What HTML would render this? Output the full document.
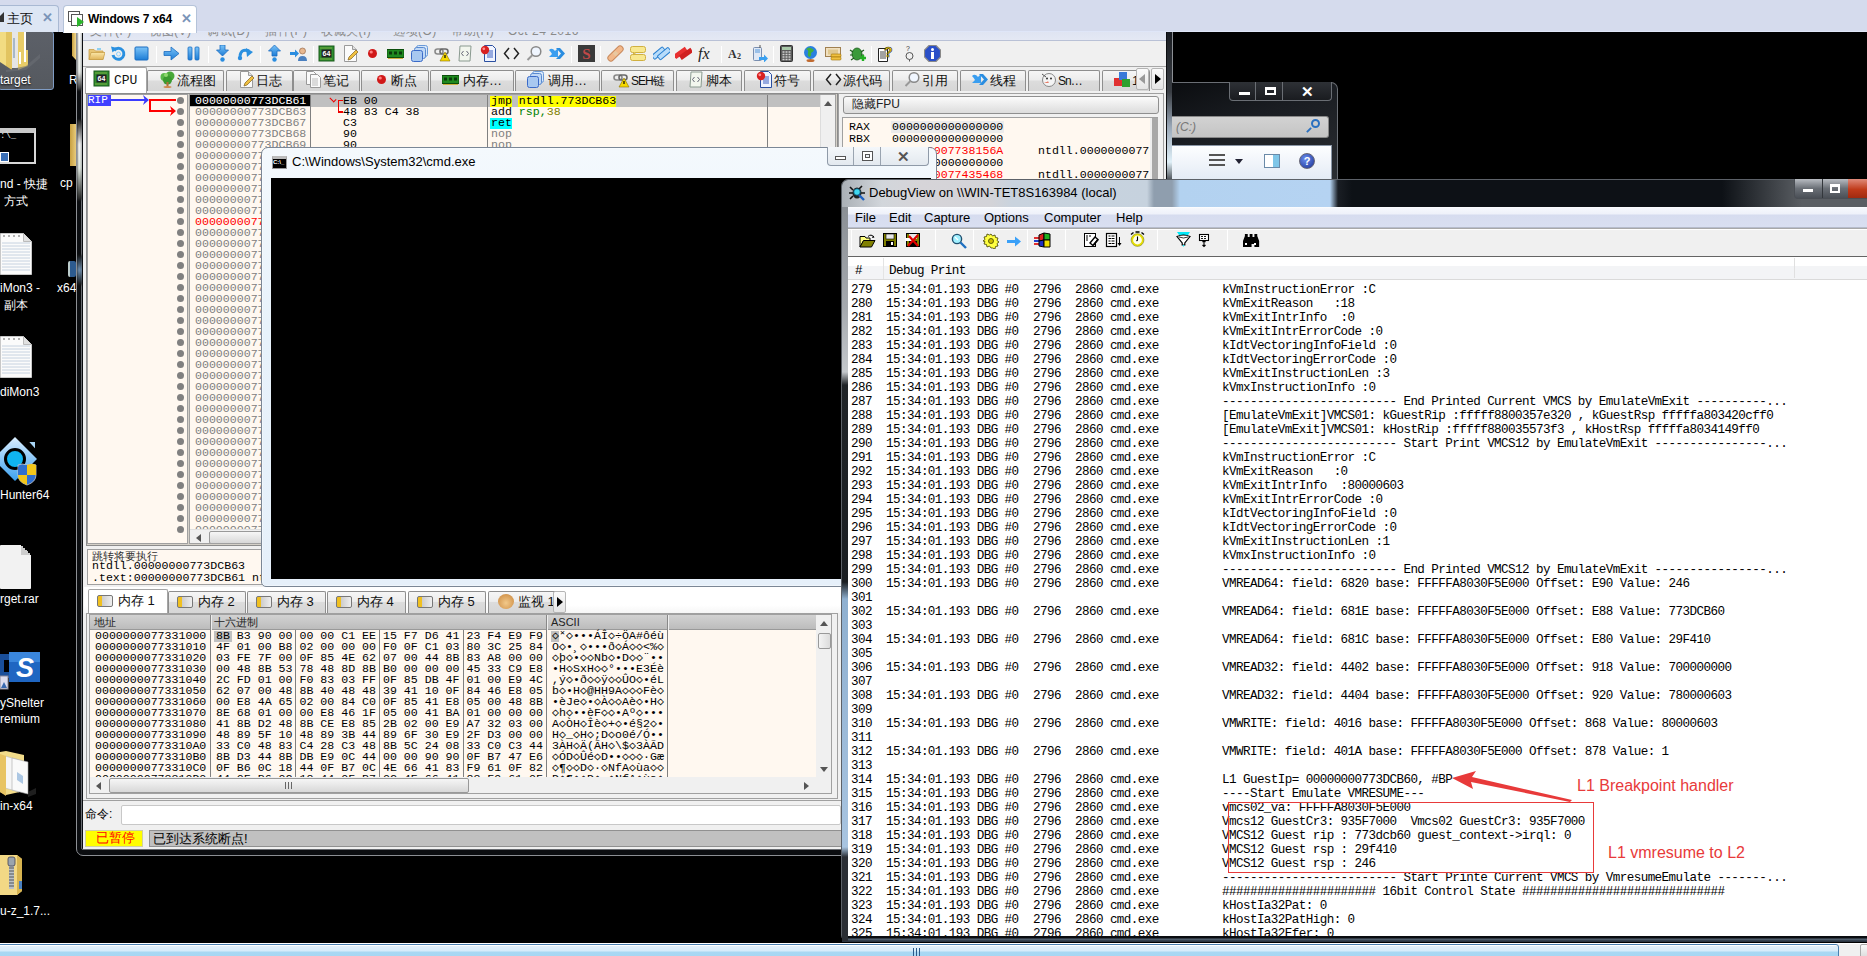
<!DOCTYPE html><html><head><meta charset="utf-8"><style>
*{margin:0;padding:0;box-sizing:border-box}
html,body{width:1867px;height:956px;overflow:hidden;background:#000;font-family:"Liberation Sans",sans-serif;font-size:12px;color:#000;position:relative}
div,span{position:absolute}
.r{position:relative}
.p{white-space:pre}
.mono{font-family:"Liberation Mono",monospace}
.ic{position:absolute;width:16px;height:16px}
</style></head><body>
<div style="left:-2px;top:31px;width:56px;height:59px;background:linear-gradient(#5c6068,#55595f);border:1px solid #7f9cc4;border-radius:3px"></div>
<svg style="position:absolute;left:0;top:32px" width="40" height="40" viewBox="0 0 40 40"><path d="M0 0h6v34l-6-4z" fill="#f2dc82"/><path d="M6 0h6v38l-6-4z" fill="#e2c460"/><path d="M12 0h6v36l-6 0z" fill="#e6e6e6"/><path d="M13 6h2v20h-2z" fill="#a8b8c8"/><path d="M18 0h8v18h2v16l-10 4z" fill="#e8cc68"/><path d="M24 0h2v30h-2z" fill="#fff"/><path d="M19 20h2v12h-2z" fill="#fff"/><path d="M6 38l20-4 14-12v4l-14 12-20 2z" fill="#6a6e74" opacity=".6"/></svg>
<div class="p" style="left:0;top:73px;font-size:12px;color:#fff;text-shadow:0 1px 2px #000">target</div>
<div style="left:72px;top:32px;width:4px;height:28px;background:linear-gradient(90deg,#c8a040,#f2d98f);clip-path:polygon(0 0,100% 0,100% 100%,0 85%)"></div>
<div class="p" style="left:69px;top:73px;color:#fff;font-size:12px">R</div>
<div style="left:-2px;top:128px;width:38px;height:36px;background:#000;border:2px solid #d8d8d8;border-top:5px solid #c9c9c9"></div>
<div class="p mono" style="left:0;top:131px;color:#ddd;font-size:9px">:\_</div>
<div style="left:0;top:152px;width:9px;height:10px;background:#3b6fb5;border:1px solid #fff"></div>
<div style="left:70px;top:124px;width:8px;height:42px;background:linear-gradient(90deg,#c8a040,#f2d98f)"></div>
<div class="p" style="left:0;top:176px;color:#fff;font-size:12px">nd - 快捷</div>
<div class="p" style="left:4px;top:193px;color:#fff;font-size:12px">方式</div>
<div class="p" style="left:60px;top:176px;color:#fff;font-size:12px">cp</div>
<svg style="position:absolute;left:0;top:233px" width="34" height="44" viewBox="0 0 34 44"><path d="M.5 .5h23l8 8v33H.5z" fill="#fbfbfb" stroke="#c8c8c8"/><path d="M2 10h28M2 13h28M2 16h28M2 19h28M2 22h28M2 25h28M2 28h28M2 31h28M2 34h28M2 37h28" stroke="#c6d2e0" stroke-width="1"/><path d="M23.5 .5v8h8" fill="#e0e0e0" stroke="#bbb"/><path d="M0 0h24l8 8h2V0z" fill="#000"/><circle cx="4" cy="3" r="1" fill="#999"/><circle cx="9" cy="3" r="1" fill="#999"/><circle cx="14" cy="3" r="1" fill="#999"/><circle cx="19" cy="3" r="1" fill="#999"/></svg>
<svg style="position:absolute;left:0;top:336px" width="34" height="44" viewBox="0 0 34 44"><path d="M.5 .5h23l8 8v33H.5z" fill="#fbfbfb" stroke="#c8c8c8"/><path d="M2 10h28M2 13h28M2 16h28M2 19h28M2 22h28M2 25h28M2 28h28M2 31h28M2 34h28M2 37h28" stroke="#c6d2e0" stroke-width="1"/><path d="M23.5 .5v8h8" fill="#e0e0e0" stroke="#bbb"/><path d="M0 0h24l8 8h2V0z" fill="#000"/><circle cx="4" cy="3" r="1" fill="#999"/><circle cx="9" cy="3" r="1" fill="#999"/><circle cx="14" cy="3" r="1" fill="#999"/><circle cx="19" cy="3" r="1" fill="#999"/></svg>
<div class="p" style="left:0;top:281px;color:#fff;font-size:12px">iMon3 -</div>
<div class="p" style="left:4px;top:297px;color:#fff;font-size:12px">副本</div>
<div class="p" style="left:57px;top:281px;color:#fff;font-size:12px">x64</div>
<div style="left:68px;top:261px;width:8px;height:16px;background:linear-gradient(90deg,#bcc 0,#bcc 2px,#2d5b8f 2px);border-radius:2px"></div>
<div class="p" style="left:0;top:385px;color:#fff;font-size:12px">diMon3</div>
<svg style="position:absolute;left:0;top:435px" width="42" height="56" viewBox="0 0 42 56"><defs><linearGradient id="hg" x1="0" y1="0" x2="0" y2="1"><stop offset="0" stop-color="#dcefff"/><stop offset="1" stop-color="#3aa0f0"/></linearGradient></defs><path d="M15 2l22 22-22 22L-7 24z" fill="url(#hg)"/><path d="M27 6h9v10z" fill="#a8d4f4" stroke="#000" stroke-width="2"/><circle cx="15" cy="24" r="9.5" fill="#10b4f0" stroke="#000" stroke-width="3"/><path d="M27 30q5-2 9 0v10q0 7-9 10-9-3-9-10V30q4-2 9 0z" fill="#2f6fcf" stroke="#ccc" stroke-width=".8"/><path d="M27 29v21M18 40h18" stroke="none"/><path d="M27 30v10h-9V32q4-2 9-2z" fill="#2f6fcf"/><path d="M27 30q5-2 9 0v10h-9z" fill="#f3c61a"/><path d="M18 40h9v10q-9-3-9-10z" fill="#f3c61a"/></svg>
<div class="p" style="left:0;top:488px;color:#fff;font-size:12px">Hunter64</div>
<div style="left:0;top:545px;width:31px;height:44px;background:#f2f2f2;border-radius:1px"></div>
<div style="left:21px;top:545px;width:10px;height:10px;background:linear-gradient(225deg,#000 50%,#ccc 50%)"></div>
<div class="p" style="left:0;top:592px;color:#fff;font-size:12px">rget.rar</div>
<svg style="position:absolute;left:0;top:650px" width="42" height="42" viewBox="0 0 42 42"><path d="M0 4h9v6H4v12h5v6H0z" fill="#1a4f9a"/><rect x="9" y="2" width="31" height="30" fill="#1f66c2"/><rect x="9" y="2" width="31" height="10" fill="#3a86dc"/><text x="25" y="27" font-family="Liberation Sans" font-weight="bold" font-style="italic" font-size="27" fill="#fff" text-anchor="middle">S</text><rect x="0" y="26" width="8" height="13" fill="#dde" stroke="#889"/><path d="M1 38l3-6 3 6z" fill="#3a6ab0"/></svg>
<div class="p" style="left:0;top:696px;color:#fff;font-size:12px">yShelter</div>
<div class="p" style="left:0;top:712px;color:#fff;font-size:12px">remium</div>
<svg style="position:absolute;left:0;top:748px" width="40" height="50" viewBox="0 0 40 50"><path d="M0 4l6-1 18 4v36L6 47 0 44z" fill="#f2dc8a"/><path d="M5 8l14 4v32L5 40z" fill="#f6f6f6" stroke="#bbb" stroke-width=".6"/><path d="M12 10l16 4v32l-16-4z" fill="#fafafa" stroke="#aaa" stroke-width=".6"/><path d="M17 24l6 4v8l-6-4z" fill="#8ab0d8" opacity=".7"/><path d="M0 6l6 2v40L0 44z" fill="#e8c463"/><path d="M28 44l8-4v6l-8 3z" fill="#333" opacity=".6"/></svg>
<div class="p" style="left:0;top:799px;color:#fff;font-size:12px">in-x64</div>
<svg style="position:absolute;left:0;top:853px" width="30" height="44" viewBox="0 0 30 44"><path d="M0 2h17l5 4v32l-5 4H0z" fill="#f2d885"/><path d="M17 2l5 4v32l-5 4z" fill="#d8b450"/><path d="M19 28h3v8h-3z" fill="#4a80c0"/><path d="M9 4h5v32H9z" fill="#b8c0c8"/><path d="M9 6h5M9 9h5M9 12h5M9 15h5M9 18h5M9 21h5M9 24h5M9 27h5M9 30h5M9 33h5" stroke="#555" stroke-width="1"/><rect x="8" y="4" width="7" height="9" rx="2" fill="#9aa4ae" stroke="#445" stroke-width=".8"/></svg>
<div class="p" style="left:0;top:904px;color:#fff;font-size:12px">u-z_1.7...</div>
<div style="left:76px;top:-10px;width:1097px;height:866px;background:#0b0d10;border:1px solid #8c8f94;border-radius:0 0 7px 7px"></div>
<div style="left:81px;top:-10px;width:1087px;height:860px;border:1px solid #6a6d72;border-radius:0 0 2px 2px"></div>
<div style="left:77px;top:0;width:5px;height:855px;overflow:hidden;border-radius:0 0 0 6px"><div style="left:0;top:30px;width:5px;height:60px;background:linear-gradient(#fff,#e8ece8 70%,#333);filter:blur(1px)"></div><div style="left:0;top:120px;width:5px;height:80px;background:linear-gradient(#222,#f0f0f0 30%,#e0e8e0 60%,#222);filter:blur(1px)"></div><div style="left:0;top:255px;width:5px;height:30px;background:linear-gradient(#111,#7090b0 50%,#111);filter:blur(1px)"></div></div>
<div style="left:1167px;top:32px;width:5px;height:150px;background:linear-gradient(#1a1d22 0,#3a3e44 60px,#9aa8b8 95px,#e0f0f8 130px,#3a3e44 150px);filter:blur(.5px)"></div>
<div style="left:83px;top:0;width:1083px;height:849px;background:#f0f0f0;overflow:hidden">
<div style="left:0;top:32px;width:1083px;height:9px;background:linear-gradient(#dfe4f2,#e4e8f4);border-bottom:1px solid #b9c1d6;overflow:hidden">
<div class="p" style="left:7px;top:-8px;font-size:12px;line-height:14px;color:#8a8a8a;letter-spacing:0.5px">文件(F)</div>
<div class="p" style="left:66px;top:-8px;font-size:12px;line-height:14px;color:#8a8a8a;letter-spacing:0.5px">视图(V)</div>
<div class="p" style="left:124px;top:-8px;font-size:12px;line-height:14px;color:#8a8a8a;letter-spacing:0.5px">调试(D)</div>
<div class="p" style="left:182px;top:-8px;font-size:12px;line-height:14px;color:#8a8a8a;letter-spacing:0.5px">插件(P)</div>
<div class="p" style="left:238px;top:-8px;font-size:12px;line-height:14px;color:#8a8a8a;letter-spacing:0.5px">收藏夹(I)</div>
<div class="p" style="left:310px;top:-8px;font-size:12px;line-height:14px;color:#8a8a8a;letter-spacing:0.5px">选项(O)</div>
<div class="p" style="left:368px;top:-8px;font-size:12px;line-height:14px;color:#8a8a8a;letter-spacing:0.5px">帮助(H)</div>
<div class="p" style="left:425px;top:-8px;font-size:12px;line-height:14px;color:#8a8a8a;letter-spacing:0.5px">Oct 24 2016</div>
</div>
<div style="left:0;top:41px;width:1083px;height:26px;background:#f0f0f0;border-bottom:1px solid #a8a8a8"></div>
<div style="left:73px;top:46px;width:1px;height:17px;background:#c8c8c8;border-right:1px solid #fff"></div>
<div style="left:125px;top:46px;width:1px;height:17px;background:#c8c8c8;border-right:1px solid #fff"></div>
<div style="left:177px;top:46px;width:1px;height:17px;background:#c8c8c8;border-right:1px solid #fff"></div>
<div style="left:230px;top:46px;width:1px;height:17px;background:#c8c8c8;border-right:1px solid #fff"></div>
<div style="left:488px;top:46px;width:1px;height:17px;background:#c8c8c8;border-right:1px solid #fff"></div>
<div style="left:517px;top:46px;width:1px;height:17px;background:#c8c8c8;border-right:1px solid #fff"></div>
<div style="left:638px;top:46px;width:1px;height:17px;background:#c8c8c8;border-right:1px solid #fff"></div>
<div style="left:690px;top:46px;width:1px;height:17px;background:#c8c8c8;border-right:1px solid #fff"></div>
<div style="left:788px;top:46px;width:1px;height:17px;background:#c8c8c8;border-right:1px solid #fff"></div>
<svg style="position:absolute;left:5px;top:45px" width="17" height="17" viewBox="0 0 17 17"><defs><linearGradient id="bl" x1="0" y1="0" x2="0" y2="1"><stop offset="0" stop-color="#7cc4f8"/><stop offset="1" stop-color="#1c7cd6"/></linearGradient><linearGradient id="fd" x1="0" y1="0" x2="0" y2="1"><stop offset="0" stop-color="#fbe7a8"/><stop offset="1" stop-color="#e0b45a"/></linearGradient></defs><path d="M1 4.5h5l1.5 1.5H15v8.5H1z" fill="#e8c574" stroke="#c9a04a" stroke-width=".8"/><path d="M1 14.5l2-7h14l-2 7z" fill="url(#fd)" stroke="#c9a04a" stroke-width=".8"/><rect x="9" y="3" width="4" height="2" fill="#8fd0f0"/></svg>
<svg style="position:absolute;left:27px;top:45px" width="17" height="17" viewBox="0 0 17 17"><path d="M4 5.5A5.5 5.5 0 1 1 3 10" fill="none" stroke="#2a90e0" stroke-width="3"/><path d="M1 1.5l6 1.5-4.5 4.5z" fill="#2a90e0"/><circle cx="8.5" cy="9" r="2" fill="none" stroke="#8cd0ff" stroke-width="1"/></svg>
<svg style="position:absolute;left:50px;top:45px" width="17" height="17" viewBox="0 0 17 17"><rect x="2" y="2" width="13" height="13" rx="1" fill="url(#bl)" stroke="#1a6cc0"/></svg>
<svg style="position:absolute;left:80px;top:45px" width="17" height="17" viewBox="0 0 17 17"><path d="M1 6.5h7V2l8 6.5-8 6.5v-4.5H1z" fill="url(#bl)" stroke="#1a6cc0" stroke-width=".8"/></svg>
<svg style="position:absolute;left:102px;top:45px" width="17" height="17" viewBox="0 0 17 17"><rect x="3" y="2" width="4" height="13" rx="1" fill="url(#bl)" stroke="#1a6cc0" stroke-width=".8"/><rect x="10" y="2" width="4" height="13" rx="1" fill="url(#bl)" stroke="#1a6cc0" stroke-width=".8"/></svg>
<svg style="position:absolute;left:131px;top:45px" width="17" height="17" viewBox="0 0 17 17"><path d="M6 0h5v5h3.5L8.5 11 2.5 5H6z" fill="url(#bl)" stroke="#1a6cc0" stroke-width=".8"/><circle cx="8.5" cy="14.5" r="2.2" fill="#2a8de0"/></svg>
<svg style="position:absolute;left:154px;top:45px" width="17" height="17" viewBox="0 0 17 17"><path d="M3 11q1-8 9-5" fill="none" stroke="#2a90e0" stroke-width="3"/><path d="M9 3l7 4-6 5z" fill="#2a90e0"/><circle cx="3" cy="13" r="2.2" fill="#2a8de0"/></svg>
<svg style="position:absolute;left:183px;top:45px" width="17" height="17" viewBox="0 0 17 17"><path d="M8.5 0l6 6H11v5H6V6H2.5z" fill="url(#bl)" stroke="#1a6cc0" stroke-width=".8"/><circle cx="8.5" cy="14.5" r="2.2" fill="#2a8de0"/></svg>
<svg style="position:absolute;left:207px;top:45px" width="17" height="17" viewBox="0 0 17 17"><path d="M0 7h5V4.5L9 8.5l-4 4V10H0z" fill="#2a8de0"/><circle cx="12.5" cy="6" r="3" fill="#e8b890" stroke="#8a5a3a" stroke-width=".6"/><path d="M8 16q0-5 4.5-5t4.5 5z" fill="#4a80c0"/></svg>
<svg style="position:absolute;left:235px;top:45px" width="17" height="17" viewBox="0 0 17 17"><rect x="1" y="1" width="15" height="15" fill="#2f8f2f" stroke="#1a5a1a"/><rect x="3.5" y="4.5" width="10" height="8" fill="#222"/><text x="8.5" y="11.2" font-family="Liberation Sans" font-weight="bold" font-size="7" fill="#fff" text-anchor="middle">64</text><path d="M3 2.5v1M5 2.5v1M7 2.5v1M9 2.5v1M11 2.5v1M13 2.5v1M3 13.5v1M5 13.5v1M7 13.5v1M9 13.5v1M11 13.5v1M13 13.5v1" stroke="#f0d060" stroke-width=".8"/></svg>
<svg style="position:absolute;left:259px;top:45px" width="17" height="17" viewBox="0 0 17 17"><path d="M2.5 .5h8l4 4v12h-12z" fill="#fbfbfb" stroke="#9a9a9a"/><path d="M10.5 .5v4h4" fill="#e0e0e0" stroke="#9a9a9a"/><path d="M6 15l1-3 7-7 2 2-7 7z" fill="#f0c040" stroke="#806020" stroke-width=".7"/></svg>
<svg style="position:absolute;left:281px;top:45px" width="17" height="17" viewBox="0 0 17 17"><circle cx="8.5" cy="8.5" r="4.5" fill="#d01818"/><circle cx="7.2" cy="7" r="1.6" fill="#ff8080"/></svg>
<svg style="position:absolute;left:304px;top:45px" width="17" height="17" viewBox="0 0 17 17"><rect x="0" y="4.5" width="17" height="8" fill="#1f8a1f" stroke="#0b4e0b"/><rect x="2" y="6.5" width="3" height="3" fill="#0b3a0b"/><rect x="7" y="6.5" width="3" height="3" fill="#0b3a0b"/><rect x="12" y="6.5" width="3" height="3" fill="#0b3a0b"/><path d="M1 13.5h15" stroke="#d0b040"/></svg>
<svg style="position:absolute;left:328px;top:45px" width="17" height="17" viewBox="0 0 17 17"><rect x="5.5" y=".5" width="11" height="11" rx="2" fill="#d8e8fa" stroke="#6a9ad8"/><rect x="3.5" y="2.5" width="11" height="11" rx="2" fill="#c0d8f5" stroke="#5a8ad0"/><rect x=".5" y="5.5" width="11" height="11" rx="2" fill="#a8c8f0" stroke="#3a6ac8"/></svg>
<svg style="position:absolute;left:351px;top:45px" width="17" height="17" viewBox="0 0 17 17"><rect x="1" y="4" width="8" height="5" rx="2.5" fill="none" stroke="#8a8a8a" stroke-width="1.6"/><rect x="6" y="4" width="8" height="5" rx="2.5" fill="none" stroke="#6a6a6a" stroke-width="1.6"/><path d="M11 7l5 9H6z" fill="#f5d800" stroke="#8a7000" stroke-width=".6"/><path d="M11 10v3" stroke="#000" stroke-width="1.2"/></svg>
<svg style="position:absolute;left:374px;top:45px" width="17" height="17" viewBox="0 0 17 17"><path d="M3 1h11l-1 15H2z" fill="#f2f6ee" stroke="#8a9a90"/><path d="M6.5 6l-2 2.5 2 2.5M9.5 6l2 2.5-2 2.5" stroke="#556" fill="none" stroke-width=".9"/></svg>
<svg style="position:absolute;left:397px;top:45px" width="17" height="17" viewBox="0 0 17 17"><path d="M4.5 .5h8l3 3v13h-11z" fill="#f0f4ff" stroke="#2a4fa0"/><path d="M7 6h6M7 8h6M7 10h6M7 12h6" stroke="#3a5fc0"/><circle cx="5" cy="5" r="4.2" fill="#d82020"/><circle cx="3.8" cy="3.8" r="1.4" fill="#ff9090"/></svg>
<svg style="position:absolute;left:420px;top:45px" width="17" height="17" viewBox="0 0 17 17"><path d="M6 3L1.5 8.5 6 14M11 3l4.5 5.5L11 14" fill="none" stroke="#222" stroke-width="1.5"/></svg>
<svg style="position:absolute;left:443px;top:45px" width="17" height="17" viewBox="0 0 17 17"><circle cx="10" cy="6.5" r="4.8" fill="#f0f6ff" stroke="#888" stroke-width="1.5"/><path d="M6.5 10L1.5 15" stroke="#999" stroke-width="2"/></svg>
<svg style="position:absolute;left:466px;top:45px" width="17" height="17" viewBox="0 0 17 17"><path d="M0 5q3-3 6 1l3-3v9H0l3-3q-1-2-3-4z" fill="#3a9ef0"/><path d="M7 3h4l5 5.5-5 5.5H7l5-5.5z" fill="#2a8de0"/></svg>
<svg style="position:absolute;left:495px;top:45px" width="17" height="17" viewBox="0 0 17 17"><rect x="0" y="0" width="17" height="17" fill="#3a3a3a"/><text x="8.5" y="14" font-family="Liberation Serif" font-weight="bold" font-size="15" fill="#c04848" text-anchor="middle">S</text></svg>
<svg style="position:absolute;left:524px;top:45px" width="17" height="17" viewBox="0 0 17 17"><rect x="-1" y="5.5" width="19" height="6" rx="3" fill="#f2b88a" stroke="#c8885a" transform="rotate(-45 8.5 8.5)"/><rect x="6.5" y="6.5" width="4" height="4" fill="#e8c8a0" transform="rotate(-45 8.5 8.5)"/></svg>
<svg style="position:absolute;left:547px;top:45px" width="17" height="17" viewBox="0 0 17 17"><rect x=".5" y="1.5" width="15" height="6" rx="2" fill="#f8e890" stroke="#d0b040"/><rect x=".5" y="9.5" width="15" height="6" rx="2" fill="#f8e890" stroke="#d0b040"/><path d="M4 7.5l-1 2.5 3-2.5" fill="#f8e890" stroke="#d0b040"/></svg>
<svg style="position:absolute;left:570px;top:45px" width="17" height="17" viewBox="0 0 17 17"><rect x="-1" y="4" width="14" height="5" rx="1" fill="#b8dcfa" stroke="#2a80d0" transform="rotate(-40 8 8)"/><rect x="3" y="8" width="14" height="5" rx="1" fill="#b8dcfa" stroke="#2a80d0" transform="rotate(-40 8 8)"/></svg>
<svg style="position:absolute;left:592px;top:45px" width="17" height="17" viewBox="0 0 17 17"><rect x="-1" y="4" width="14" height="5" fill="#e83030" transform="rotate(-35 8 8)"/><rect x="3" y="8" width="14" height="5" fill="#d02020" transform="rotate(-35 8 8)"/></svg>
<svg style="position:absolute;left:615px;top:45px" width="17" height="17" viewBox="0 0 17 17"><text x="0" y="14" font-family="Liberation Serif" font-style="italic" font-size="16" fill="#222">fx</text></svg>
<svg style="position:absolute;left:645px;top:45px" width="17" height="17" viewBox="0 0 17 17"><text x="0" y="13" font-family="Liberation Serif" font-weight="bold" font-size="12" fill="#333">A</text><text x="9" y="14" font-family="Liberation Serif" font-weight="bold" font-size="8" fill="#333">2</text></svg>
<svg style="position:absolute;left:668px;top:45px" width="17" height="17" viewBox="0 0 17 17"><rect x="2.5" y="2.5" width="8" height="13" rx="1" fill="#dfe8f5" stroke="#7a8fb0"/><rect x="4" y="4" width="5" height="4" fill="#9ac0e8"/><path d="M9 0v3" stroke="#555"/><path d="M8 12h5v-2.5l4 4-4 4V15H8z" fill="#3aa0f0"/></svg>
<svg style="position:absolute;left:695px;top:45px" width="17" height="17" viewBox="0 0 17 17"><rect x="2.5" y=".5" width="12" height="16" rx="1" fill="#5a5a5a" stroke="#333"/><rect x="4" y="2" width="9" height="3" fill="#a8c8a8"/><path d="M4.5 7h2M7.5 7h2M10.5 7h2M4.5 9.5h2M7.5 9.5h2M10.5 9.5h2M4.5 12h2M7.5 12h2M10.5 12h2M4.5 14.5h2M7.5 14.5h2M10.5 14.5h2" stroke="#d0d0d0" stroke-width="1.3"/></svg>
<svg style="position:absolute;left:719px;top:45px" width="17" height="17" viewBox="0 0 17 17"><circle cx="8.5" cy="7.5" r="6.5" fill="#2a80e0"/><path d="M4 4q3 1 2 4t2 4q2-2 1-4 2-1 3-3-2-2-5-2.5z" fill="#40b040"/><ellipse cx="8.5" cy="15.5" rx="4" ry="1.5" fill="#c06a30"/></svg>
<svg style="position:absolute;left:742px;top:45px" width="17" height="17" viewBox="0 0 17 17"><rect x=".5" y="2.5" width="15" height="9" fill="#f0e0c0" stroke="#a08050"/><rect x="3" y="4.5" width="10" height="5" fill="#e0c890"/><rect x="6" y="9" width="10" height="3" rx="1" fill="#f0c040" stroke="#a07000" stroke-width=".6"/><rect x="6" y="12" width="10" height="3" rx="1" fill="#f0c040" stroke="#a07000" stroke-width=".6"/></svg>
<svg style="position:absolute;left:766px;top:45px" width="17" height="17" viewBox="0 0 17 17"><ellipse cx="8" cy="9" rx="5" ry="6" fill="#3a9a3a" stroke="#1a5a1a" stroke-width=".8"/><path d="M1 5l3 2M1 10h3M2 15l3-2M15 5l-3 2M15 10h-3" stroke="#1a5a1a" stroke-width="1.2"/><path d="M11 13h6M14 10v6" stroke="#20b020" stroke-width="2.4"/></svg>
<svg style="position:absolute;left:794px;top:45px" width="17" height="17" viewBox="0 0 17 17"><path d="M1.5 3.5h9v13h-9z" fill="#fff" stroke="#222"/><path d="M3 7h6M3 9h6M3 11h6M3 13h6" stroke="#444"/><text x="7" y="12" font-family="Liberation Sans" font-weight="bold" font-size="14" fill="#ffd800" stroke="#222" stroke-width=".6">?</text></svg>
<svg style="position:absolute;left:818px;top:45px" width="17" height="17" viewBox="0 0 17 17"><text x="5" y="6" font-family="Liberation Sans" font-size="7" fill="#333">?</text><circle cx="8.5" cy="11" r="3.5" fill="none" stroke="#555"/><path d="M8.5 14.5v2" stroke="#555"/></svg>
<svg style="position:absolute;left:841px;top:45px" width="17" height="17" viewBox="0 0 17 17"><path d="M5 .5h7l4.5 4.5v7L12 16.5H5L.5 12V5z" fill="#2a4fc8" stroke="#888" stroke-width="1.2"/><circle cx="8.5" cy="4.5" r="1.5" fill="#fff"/><rect x="7" y="7" width="3" height="7" fill="#fff"/></svg>
<div style="left:0;top:67px;width:1083px;height:26px;background:#f0f0f0"></div>
<div style="left:64px;top:70px;width:77px;height:21px;background:linear-gradient(#f6f6f6,#ececec 45%,#dcdcdc 50%,#d6d6d6);border:1px solid #8e8e8e;border-bottom:none;border-radius:2px 2px 0 0"></div>
<div class="p" style="left:94px;top:73px;font-size:13px;line-height:16px;color:#111;">流程图</div>
<div style="left:143px;top:70px;width:67px;height:21px;background:linear-gradient(#f6f6f6,#ececec 45%,#dcdcdc 50%,#d6d6d6);border:1px solid #8e8e8e;border-bottom:none;border-radius:2px 2px 0 0"></div>
<div class="p" style="left:173px;top:73px;font-size:13px;line-height:16px;color:#111;">日志</div>
<div style="left:210px;top:70px;width:67px;height:21px;background:linear-gradient(#f6f6f6,#ececec 45%,#dcdcdc 50%,#d6d6d6);border:1px solid #8e8e8e;border-bottom:none;border-radius:2px 2px 0 0"></div>
<div class="p" style="left:240px;top:73px;font-size:13px;line-height:16px;color:#111;">笔记</div>
<div style="left:278px;top:70px;width:68px;height:21px;background:linear-gradient(#f6f6f6,#ececec 45%,#dcdcdc 50%,#d6d6d6);border:1px solid #8e8e8e;border-bottom:none;border-radius:2px 2px 0 0"></div>
<div class="p" style="left:308px;top:73px;font-size:13px;line-height:16px;color:#111;">断点</div>
<div style="left:347px;top:70px;width:84px;height:21px;background:linear-gradient(#f6f6f6,#ececec 45%,#dcdcdc 50%,#d6d6d6);border:1px solid #8e8e8e;border-bottom:none;border-radius:2px 2px 0 0"></div>
<div class="p" style="left:380px;top:73px;font-size:13px;line-height:16px;color:#111;">内存…</div>
<div style="left:432px;top:70px;width:85px;height:21px;background:linear-gradient(#f6f6f6,#ececec 45%,#dcdcdc 50%,#d6d6d6);border:1px solid #8e8e8e;border-bottom:none;border-radius:2px 2px 0 0"></div>
<div class="p" style="left:465px;top:73px;font-size:13px;line-height:16px;color:#111;">调用…</div>
<div style="left:518px;top:70px;width:73px;height:21px;background:linear-gradient(#f6f6f6,#ececec 45%,#dcdcdc 50%,#d6d6d6);border:1px solid #8e8e8e;border-bottom:none;border-radius:2px 2px 0 0"></div>
<div class="p" style="left:548px;top:73px;font-size:13px;line-height:16px;color:#111;letter-spacing:-1px;font-size:12px">SEH链</div>
<div style="left:593px;top:70px;width:66px;height:21px;background:linear-gradient(#f6f6f6,#ececec 45%,#dcdcdc 50%,#d6d6d6);border:1px solid #8e8e8e;border-bottom:none;border-radius:2px 2px 0 0"></div>
<div class="p" style="left:623px;top:73px;font-size:13px;line-height:16px;color:#111;">脚本</div>
<div style="left:661px;top:70px;width:67px;height:21px;background:linear-gradient(#f6f6f6,#ececec 45%,#dcdcdc 50%,#d6d6d6);border:1px solid #8e8e8e;border-bottom:none;border-radius:2px 2px 0 0"></div>
<div class="p" style="left:691px;top:73px;font-size:13px;line-height:16px;color:#111;">符号</div>
<div style="left:730px;top:70px;width:77px;height:21px;background:linear-gradient(#f6f6f6,#ececec 45%,#dcdcdc 50%,#d6d6d6);border:1px solid #8e8e8e;border-bottom:none;border-radius:2px 2px 0 0"></div>
<div class="p" style="left:760px;top:73px;font-size:13px;line-height:16px;color:#111;">源代码</div>
<div style="left:809px;top:70px;width:66px;height:21px;background:linear-gradient(#f6f6f6,#ececec 45%,#dcdcdc 50%,#d6d6d6);border:1px solid #8e8e8e;border-bottom:none;border-radius:2px 2px 0 0"></div>
<div class="p" style="left:839px;top:73px;font-size:13px;line-height:16px;color:#111;">引用</div>
<div style="left:877px;top:70px;width:66px;height:21px;background:linear-gradient(#f6f6f6,#ececec 45%,#dcdcdc 50%,#d6d6d6);border:1px solid #8e8e8e;border-bottom:none;border-radius:2px 2px 0 0"></div>
<div class="p" style="left:907px;top:73px;font-size:13px;line-height:16px;color:#111;">线程</div>
<div style="left:945px;top:70px;width:72px;height:21px;background:linear-gradient(#f6f6f6,#ececec 45%,#dcdcdc 50%,#d6d6d6);border:1px solid #8e8e8e;border-bottom:none;border-radius:2px 2px 0 0"></div>
<div class="p" style="left:975px;top:73px;font-size:13px;line-height:16px;color:#111;letter-spacing:-1px;font-size:12px">Sn…</div>
<div style="left:1019px;top:70px;width:48px;height:21px;background:linear-gradient(#f6f6f6,#ececec 45%,#dcdcdc 50%,#d6d6d6);border:1px solid #8e8e8e;border-bottom:none;border-radius:2px 2px 0 0"></div>
<div class="p" style="left:1049px;top:73px;font-size:13px;line-height:16px;color:#111;">1</div>
<div style="left:2px;top:67px;width:62px;height:27px;background:#fff;border:1px solid #a5a5a5;border-bottom:none;border-radius:2px 2px 0 0"></div>
<div class="p" style="left:31px;top:73px;font:13px/16px 'Liberation Mono';color:#111">CPU</div>
<svg style="position:absolute;left:76px;top:71px" width="17" height="17" viewBox="0 0 17 17"><circle cx="5.5" cy="6" r="4" fill="#5ab84a"/><circle cx="11" cy="5" r="4.5" fill="#48a838"/><circle cx="8.5" cy="9" r="4.5" fill="#3a9a30"/><circle cx="7" cy="4" r="2" fill="#8fd870"/><path d="M7.5 11h2v5h-2z" fill="#b0703a"/><ellipse cx="8.5" cy="16" rx="4" ry="1" fill="#d08a50"/></svg>
<svg style="position:absolute;left:155px;top:71px" width="17" height="17" viewBox="0 0 17 17"><path d="M2.5 .5h8l4 4v12h-12z" fill="#fbfbfb" stroke="#9a9a9a"/><path d="M10.5 .5v4h4" fill="#e0e0e0" stroke="#9a9a9a"/><path d="M6 15l1-3 7-7 2 2-7 7z" fill="#f0c040" stroke="#806020" stroke-width=".7"/></svg>
<svg style="position:absolute;left:222px;top:71px" width="17" height="17" viewBox="0 0 17 17"><path d="M1.5 .5h7l3 3v10h-10z" fill="#fafafa" stroke="#999"/><path d="M5.5 3.5h7l3 3v10h-10z" fill="#fafafa" stroke="#999"/><path d="M7 8h6M7 10h6M7 12h6M7 14h6" stroke="#bbb"/></svg>
<svg style="position:absolute;left:290px;top:71px" width="17" height="17" viewBox="0 0 17 17"><circle cx="8.5" cy="8.5" r="4.5" fill="#d01818"/><circle cx="7.2" cy="7" r="1.6" fill="#ff8080"/></svg>
<svg style="position:absolute;left:359px;top:71px" width="17" height="17" viewBox="0 0 17 17"><rect x="0" y="4.5" width="17" height="8" fill="#1f8a1f" stroke="#0b4e0b"/><rect x="2" y="6.5" width="3" height="3" fill="#0b3a0b"/><rect x="7" y="6.5" width="3" height="3" fill="#0b3a0b"/><rect x="12" y="6.5" width="3" height="3" fill="#0b3a0b"/><path d="M1 13.5h15" stroke="#d0b040"/></svg>
<svg style="position:absolute;left:444px;top:71px" width="17" height="17" viewBox="0 0 17 17"><rect x="5.5" y=".5" width="11" height="11" rx="2" fill="#d8e8fa" stroke="#6a9ad8"/><rect x="3.5" y="2.5" width="11" height="11" rx="2" fill="#c0d8f5" stroke="#5a8ad0"/><rect x=".5" y="5.5" width="11" height="11" rx="2" fill="#a8c8f0" stroke="#3a6ac8"/></svg>
<svg style="position:absolute;left:530px;top:71px" width="17" height="17" viewBox="0 0 17 17"><rect x="1" y="4" width="8" height="5" rx="2.5" fill="none" stroke="#8a8a8a" stroke-width="1.6"/><rect x="6" y="4" width="8" height="5" rx="2.5" fill="none" stroke="#6a6a6a" stroke-width="1.6"/><path d="M11 7l5 9H6z" fill="#f5d800" stroke="#8a7000" stroke-width=".6"/><path d="M11 10v3" stroke="#000" stroke-width="1.2"/></svg>
<svg style="position:absolute;left:605px;top:71px" width="17" height="17" viewBox="0 0 17 17"><path d="M3 1h11l-1 15H2z" fill="#f2f6ee" stroke="#8a9a90"/><path d="M6.5 6l-2 2.5 2 2.5M9.5 6l2 2.5-2 2.5" stroke="#556" fill="none" stroke-width=".9"/></svg>
<svg style="position:absolute;left:673px;top:71px" width="17" height="17" viewBox="0 0 17 17"><path d="M4.5 .5h8l3 3v13h-11z" fill="#f0f4ff" stroke="#2a4fa0"/><path d="M7 6h6M7 8h6M7 10h6M7 12h6" stroke="#3a5fc0"/><circle cx="5" cy="5" r="4.2" fill="#d82020"/><circle cx="3.8" cy="3.8" r="1.4" fill="#ff9090"/></svg>
<svg style="position:absolute;left:742px;top:71px" width="17" height="17" viewBox="0 0 17 17"><path d="M6 3L1.5 8.5 6 14M11 3l4.5 5.5L11 14" fill="none" stroke="#222" stroke-width="1.5"/></svg>
<svg style="position:absolute;left:821px;top:71px" width="17" height="17" viewBox="0 0 17 17"><circle cx="10" cy="6.5" r="4.8" fill="#f0f6ff" stroke="#888" stroke-width="1.5"/><path d="M6.5 10L1.5 15" stroke="#999" stroke-width="2"/></svg>
<svg style="position:absolute;left:889px;top:71px" width="17" height="17" viewBox="0 0 17 17"><path d="M0 5q3-3 6 1l3-3v9H0l3-3q-1-2-3-4z" fill="#3a9ef0"/><path d="M7 3h4l5 5.5-5 5.5H7l5-5.5z" fill="#2a8de0"/></svg>
<svg style="position:absolute;left:957px;top:71px" width="17" height="17" viewBox="0 0 17 17"><circle cx="9" cy="9" r="6.5" fill="#f4f4f4" stroke="#888"/><circle cx="7" cy="7.5" r="1" fill="#333"/><circle cx="11" cy="7.5" r="1" fill="#333"/><path d="M4 12l4-1.5 1 1z" fill="#e04020"/><path d="M2 3l4 3" stroke="#555"/></svg>
<svg style="position:absolute;left:1031px;top:71px" width="17" height="17" viewBox="0 0 17 17"><rect x="0" y="7" width="8" height="8" fill="#e03030"/><rect x="5" y="1" width="8" height="8" fill="#3a7ad8"/><rect x="8" y="8" width="8" height="8" fill="#2fa02f"/></svg>
<svg style="position:absolute;left:10px;top:70px" width="17" height="17" viewBox="0 0 17 17"><rect x="1" y="1" width="15" height="15" fill="#2f8f2f" stroke="#1a5a1a"/><rect x="3.5" y="4.5" width="10" height="8" fill="#222"/><text x="8.5" y="11.2" font-family="Liberation Sans" font-weight="bold" font-size="7" fill="#fff" text-anchor="middle">64</text><path d="M3 2.5v1M5 2.5v1M7 2.5v1M9 2.5v1M11 2.5v1M13 2.5v1M3 13.5v1M5 13.5v1M7 13.5v1M9 13.5v1M11 13.5v1M13 13.5v1" stroke="#f0d060" stroke-width=".8"/></svg>
<div style="left:1053px;top:68px;width:13px;height:22px;background:linear-gradient(#fbfbfb,#e5e5e5);border:1px solid #b5b5b5;border-radius:2px"></div>
<div style="left:1056px;top:74px;width:6px;height:10px;background:#999;clip-path:polygon(100% 0,0 50%,100% 100%)"></div>
<div style="left:1068px;top:68px;width:13px;height:22px;background:linear-gradient(#fbfbfb,#e5e5e5);border:1px solid #b5b5b5;border-radius:2px"></div>
<div style="left:1072px;top:74px;width:6px;height:10px;background:#000;clip-path:polygon(0 0,100% 50%,0 100%)"></div>
<div style="left:3px;top:93px;width:752px;height:453px;background:#d4d0c8;border:1px solid #8c8c8c"></div>
<div style="left:4px;top:94px;width:101px;height:450px;background:#fff8f0;border:1px solid #a0a0a0"></div>
<div style="left:106px;top:94px;width:647px;height:450px;background:#fff8f0;border:1px solid #a0a0a0;overflow:hidden">
<div style="left:0;top:0;width:630px;height:12px;background:#c0c0c0"></div>
<div style="left:0;top:0;width:120px;height:11px;background:#000"></div>
<div class="p mono" style="left:5px;top:0px;font-size:11.6px;line-height:12px;color:#fff">00000000773DCB61</div>
<div class="p mono" style="left:153px;top:0px;font-size:11.6px;line-height:12px;color:#000">EB 00</div>
<div class="p mono" style="left:5px;top:11px;font-size:11.6px;line-height:12px;color:#808080">00000000773DCB63</div>
<div class="p mono" style="left:153px;top:11px;font-size:11.6px;line-height:12px;color:#000">48 83 C4 38</div>
<div class="p mono" style="left:5px;top:22px;font-size:11.6px;line-height:12px;color:#808080">00000000773DCB67</div>
<div class="p mono" style="left:153px;top:22px;font-size:11.6px;line-height:12px;color:#000">C3</div>
<div class="p mono" style="left:5px;top:33px;font-size:11.6px;line-height:12px;color:#808080">00000000773DCB68</div>
<div class="p mono" style="left:153px;top:33px;font-size:11.6px;line-height:12px;color:#000">90</div>
<div class="p mono" style="left:5px;top:44px;font-size:11.6px;line-height:12px;color:#808080">00000000773DCB69</div>
<div class="p mono" style="left:153px;top:44px;font-size:11.6px;line-height:12px;color:#000">90</div>
<div class="p mono" style="left:5px;top:55px;font-size:11.6px;line-height:12px;color:#808080">00000000773DCB6A</div>
<div class="p mono" style="left:5px;top:66px;font-size:11.6px;line-height:12px;color:#808080">00000000773DCB6B</div>
<div class="p mono" style="left:5px;top:77px;font-size:11.6px;line-height:12px;color:#808080">00000000773DCB6C</div>
<div class="p mono" style="left:5px;top:88px;font-size:11.6px;line-height:12px;color:#808080">00000000773DCB6D</div>
<div class="p mono" style="left:5px;top:99px;font-size:11.6px;line-height:12px;color:#808080">00000000773DCB6E</div>
<div class="p mono" style="left:5px;top:110px;font-size:11.6px;line-height:12px;color:#808080">00000000773DCB6F</div>
<div class="p mono" style="left:5px;top:121px;font-size:11.6px;line-height:12px;color:#ff0000">00000000773DCB70</div>
<div class="p mono" style="left:5px;top:132px;font-size:11.6px;line-height:12px;color:#808080">00000000773DCB71</div>
<div class="p mono" style="left:5px;top:143px;font-size:11.6px;line-height:12px;color:#808080">00000000773DCB72</div>
<div class="p mono" style="left:5px;top:154px;font-size:11.6px;line-height:12px;color:#808080">00000000773DCB73</div>
<div class="p mono" style="left:5px;top:165px;font-size:11.6px;line-height:12px;color:#808080">00000000773DCB74</div>
<div class="p mono" style="left:5px;top:176px;font-size:11.6px;line-height:12px;color:#808080">00000000773DCB75</div>
<div class="p mono" style="left:5px;top:187px;font-size:11.6px;line-height:12px;color:#808080">00000000773DCB76</div>
<div class="p mono" style="left:5px;top:198px;font-size:11.6px;line-height:12px;color:#808080">00000000773DCB77</div>
<div class="p mono" style="left:5px;top:209px;font-size:11.6px;line-height:12px;color:#808080">00000000773DCB78</div>
<div class="p mono" style="left:5px;top:220px;font-size:11.6px;line-height:12px;color:#808080">00000000773DCB79</div>
<div class="p mono" style="left:5px;top:231px;font-size:11.6px;line-height:12px;color:#808080">00000000773DCB7A</div>
<div class="p mono" style="left:5px;top:242px;font-size:11.6px;line-height:12px;color:#808080">00000000773DCB7B</div>
<div class="p mono" style="left:5px;top:253px;font-size:11.6px;line-height:12px;color:#808080">00000000773DCB7C</div>
<div class="p mono" style="left:5px;top:264px;font-size:11.6px;line-height:12px;color:#808080">00000000773DCB7D</div>
<div class="p mono" style="left:5px;top:275px;font-size:11.6px;line-height:12px;color:#808080">00000000773DCB7E</div>
<div class="p mono" style="left:5px;top:286px;font-size:11.6px;line-height:12px;color:#808080">00000000773DCB7F</div>
<div class="p mono" style="left:5px;top:297px;font-size:11.6px;line-height:12px;color:#808080">00000000773DCB80</div>
<div class="p mono" style="left:5px;top:308px;font-size:11.6px;line-height:12px;color:#808080">00000000773DCB81</div>
<div class="p mono" style="left:5px;top:319px;font-size:11.6px;line-height:12px;color:#808080">00000000773DCB82</div>
<div class="p mono" style="left:5px;top:330px;font-size:11.6px;line-height:12px;color:#808080">00000000773DCB83</div>
<div class="p mono" style="left:5px;top:341px;font-size:11.6px;line-height:12px;color:#808080">00000000773DCB84</div>
<div class="p mono" style="left:5px;top:352px;font-size:11.6px;line-height:12px;color:#808080">00000000773DCB85</div>
<div class="p mono" style="left:5px;top:363px;font-size:11.6px;line-height:12px;color:#808080">00000000773DCB86</div>
<div class="p mono" style="left:5px;top:374px;font-size:11.6px;line-height:12px;color:#808080">00000000773DCB87</div>
<div class="p mono" style="left:5px;top:385px;font-size:11.6px;line-height:12px;color:#808080">00000000773DCB88</div>
<div class="p mono" style="left:5px;top:396px;font-size:11.6px;line-height:12px;color:#808080">00000000773DCB89</div>
<div class="p mono" style="left:5px;top:407px;font-size:11.6px;line-height:12px;color:#808080">00000000773DCB8A</div>
<div class="p mono" style="left:5px;top:418px;font-size:11.6px;line-height:12px;color:#808080">00000000773DCB8B</div>
<div class="p mono" style="left:5px;top:429px;font-size:11.6px;line-height:12px;color:#808080">00000000773DCB8C</div>
<div style="left:300px;top:1px;width:22px;height:11px;background:#ffff00"></div>
<div style="left:328px;top:1px;width:98px;height:11px;background:#ffff00"></div>
<div style="left:300px;top:23px;width:22px;height:11px;background:#00ffff"></div>
<div class="p mono" style="left:301px;top:0px;font-size:11.6px;line-height:12px;color:#000">jmp <span class="r" style="color:#000">ntdll.773DCB63</span></div>
<div class="p mono" style="left:301px;top:11px;font-size:11.6px;line-height:12px;color:#000">add <span class="r" style="color:#008000">rsp,<span class="r" style="color:#808000">38</span></span></div>
<div class="p mono" style="left:301px;top:22px;font-size:11.6px;line-height:12px;color:#000">ret</div>
<div class="p mono" style="left:301px;top:33px;font-size:11.6px;line-height:12px;color:#808080">nop</div>
<div class="p mono" style="left:301px;top:44px;font-size:11.6px;line-height:12px;color:#808080">nop</div>
<div style="left:120px;top:0;width:1px;height:450px;background:#808080"></div>
<div style="left:297px;top:0;width:1px;height:450px;background:#808080"></div>
<div style="left:577px;top:0;width:1px;height:450px;background:#808080"></div>
<div style="left:140px;top:2px;width:6px;height:4px;border:1px solid #e00;border-top:none;border-left:none;transform:rotate(45deg)"></div>
<div style="left:148px;top:5px;width:5px;height:13px;border:1px solid #e00;border-right:none;border-bottom:2px solid #e00"></div>
<div style="left:630px;top:0;width:16px;height:450px;background:#f0f0f0;border-left:1px solid #ddd"></div>
<div style="left:634px;top:6px;width:8px;height:5px;background:#555;clip-path:polygon(50% 0,100% 100%,0 100%)"></div>
<div style="left:0;top:434px;width:630px;height:16px;background:#f0f0f0;border-top:1px solid #e0e0e0"></div>
<div style="left:6px;top:439px;width:5px;height:8px;background:#555;clip-path:polygon(100% 0,0 50%,100% 100%)"></div>
<div style="left:19px;top:436px;width:600px;height:13px;background:linear-gradient(#f6f6f6,#d8d8d8);border:1px solid #999;border-radius:2px"></div>
</div>
<div class="p mono" style="left:5px;top:95px;width:23px;height:11px;background:#4040ff;color:#fff;font-size:11px;line-height:11px">RIP</div>
<div style="left:28px;top:99px;width:37px;height:2px;background:#3b3bff"></div>
<div style="left:60px;top:95px;width:6px;height:10px;background:#3b3bff;clip-path:polygon(0 0,100% 50%,0 100%,30% 50%)"></div>
<div style="left:66px;top:99px;width:27px;height:2px;background:#f00"></div>
<div style="left:66px;top:99px;width:2px;height:13px;background:#f00"></div>
<div style="left:66px;top:110px;width:25px;height:2px;background:#f00"></div>
<div style="left:87px;top:106px;width:6px;height:10px;background:#f00;clip-path:polygon(0 0,100% 50%,0 100%,30% 50%)"></div>
<div style="left:94px;top:97px;width:7px;height:7px;border-radius:50%;background:#808080"></div>
<div style="left:94px;top:108px;width:7px;height:7px;border-radius:50%;background:#808080"></div>
<div style="left:94px;top:119px;width:7px;height:7px;border-radius:50%;background:#808080"></div>
<div style="left:94px;top:130px;width:7px;height:7px;border-radius:50%;background:#808080"></div>
<div style="left:94px;top:141px;width:7px;height:7px;border-radius:50%;background:#808080"></div>
<div style="left:94px;top:152px;width:7px;height:7px;border-radius:50%;background:#808080"></div>
<div style="left:94px;top:163px;width:7px;height:7px;border-radius:50%;background:#808080"></div>
<div style="left:94px;top:174px;width:7px;height:7px;border-radius:50%;background:#808080"></div>
<div style="left:94px;top:185px;width:7px;height:7px;border-radius:50%;background:#808080"></div>
<div style="left:94px;top:196px;width:7px;height:7px;border-radius:50%;background:#808080"></div>
<div style="left:94px;top:207px;width:7px;height:7px;border-radius:50%;background:#808080"></div>
<div style="left:94px;top:218px;width:7px;height:7px;border-radius:50%;background:#808080"></div>
<div style="left:94px;top:229px;width:7px;height:7px;border-radius:50%;background:#808080"></div>
<div style="left:94px;top:240px;width:7px;height:7px;border-radius:50%;background:#808080"></div>
<div style="left:94px;top:251px;width:7px;height:7px;border-radius:50%;background:#808080"></div>
<div style="left:94px;top:262px;width:7px;height:7px;border-radius:50%;background:#808080"></div>
<div style="left:94px;top:273px;width:7px;height:7px;border-radius:50%;background:#808080"></div>
<div style="left:94px;top:284px;width:7px;height:7px;border-radius:50%;background:#808080"></div>
<div style="left:94px;top:295px;width:7px;height:7px;border-radius:50%;background:#808080"></div>
<div style="left:94px;top:306px;width:7px;height:7px;border-radius:50%;background:#808080"></div>
<div style="left:94px;top:317px;width:7px;height:7px;border-radius:50%;background:#808080"></div>
<div style="left:94px;top:328px;width:7px;height:7px;border-radius:50%;background:#808080"></div>
<div style="left:94px;top:339px;width:7px;height:7px;border-radius:50%;background:#808080"></div>
<div style="left:94px;top:350px;width:7px;height:7px;border-radius:50%;background:#808080"></div>
<div style="left:94px;top:361px;width:7px;height:7px;border-radius:50%;background:#808080"></div>
<div style="left:94px;top:372px;width:7px;height:7px;border-radius:50%;background:#808080"></div>
<div style="left:94px;top:383px;width:7px;height:7px;border-radius:50%;background:#808080"></div>
<div style="left:94px;top:394px;width:7px;height:7px;border-radius:50%;background:#808080"></div>
<div style="left:94px;top:405px;width:7px;height:7px;border-radius:50%;background:#808080"></div>
<div style="left:94px;top:416px;width:7px;height:7px;border-radius:50%;background:#808080"></div>
<div style="left:94px;top:427px;width:7px;height:7px;border-radius:50%;background:#808080"></div>
<div style="left:94px;top:438px;width:7px;height:7px;border-radius:50%;background:#808080"></div>
<div style="left:94px;top:449px;width:7px;height:7px;border-radius:50%;background:#808080"></div>
<div style="left:94px;top:460px;width:7px;height:7px;border-radius:50%;background:#808080"></div>
<div style="left:94px;top:471px;width:7px;height:7px;border-radius:50%;background:#808080"></div>
<div style="left:94px;top:482px;width:7px;height:7px;border-radius:50%;background:#808080"></div>
<div style="left:94px;top:493px;width:7px;height:7px;border-radius:50%;background:#808080"></div>
<div style="left:94px;top:504px;width:7px;height:7px;border-radius:50%;background:#808080"></div>
<div style="left:94px;top:515px;width:7px;height:7px;border-radius:50%;background:#808080"></div>
<div style="left:94px;top:526px;width:7px;height:7px;border-radius:50%;background:#808080"></div>
<div style="left:755px;top:93px;width:326px;height:460px;background:#f0f0f0;border:1px solid #a0a0a0"></div>
<div style="left:760px;top:96px;width:316px;height:18px;background:linear-gradient(#fbfbfb,#dcdcdc);border:1px solid #8f8f8f;border-radius:3px"></div>
<div class="p" style="left:769px;top:97px;font-size:12px;line-height:15px;color:#222">隐藏FPU</div>
<div style="left:759px;top:117px;width:316px;height:440px;background:#fff8f0;border:1px solid #a0a0a0"></div>
<div style="left:1067px;top:118px;width:8px;height:440px;background:#a8a8a8;border-left:2px solid #eee"></div>
<div style="left:808px;top:121px;width:113px;height:12px;background:#ebebeb"></div>
<div class="p mono" style="left:766px;top:121px;font-size:11.6px;line-height:12px;color:#000">RAX</div>
<div class="p mono" style="left:809px;top:121px;font-size:11.6px;line-height:12px;color:#000">0000000000000000</div>
<div class="p mono" style="left:766px;top:133px;font-size:11.6px;line-height:12px;color:#000">RBX</div>
<div class="p mono" style="left:809px;top:133px;font-size:11.6px;line-height:12px;color:#000">0000000000000000</div>
<div class="p mono" style="left:766px;top:145px;font-size:11.6px;line-height:12px;color:#000">RCX</div>
<div class="p mono" style="left:809px;top:145px;font-size:11.6px;line-height:12px;color:#f00">000000007738156A</div>
<div class="p mono" style="left:955px;top:145px;font-size:11.6px;line-height:12px;color:#000">ntdll.0000000077</div>
<div class="p mono" style="left:766px;top:157px;font-size:11.6px;line-height:12px;color:#000">RDX</div>
<div class="p mono" style="left:809px;top:157px;font-size:11.6px;line-height:12px;color:#000">0000000000000000</div>
<div class="p mono" style="left:766px;top:169px;font-size:11.6px;line-height:12px;color:#000">RSI</div>
<div class="p mono" style="left:809px;top:169px;font-size:11.6px;line-height:12px;color:#f00">0000000077435468</div>
<div class="p mono" style="left:955px;top:169px;font-size:11.6px;line-height:12px;color:#000">ntdll.0000000077</div>
<div style="left:3px;top:546px;width:752px;height:40px;background:#f0f0f0"></div>
<div style="left:4px;top:549px;width:750px;height:36px;background:#fff8f0;border:1px solid #a0a0a0"></div>
<div class="p" style="left:9px;top:550px;font-size:11px;line-height:12px;color:#333">跳转将要执行</div>
<div class="p mono" style="left:9px;top:560px;font-size:11.6px;line-height:12px;color:#000">ntdll.00000000773DCB63</div>
<div class="p mono" style="left:9px;top:572px;font-size:11.6px;line-height:12px;color:#000">.text:00000000773DCB61 ntdll.00000000773DCB61</div>
<div style="left:1px;top:587px;width:1080px;height:26px;background:linear-gradient(#fff,#fff 70%,#f6f6f6)"></div>
<div style="left:85px;top:591px;width:78px;height:22px;background:linear-gradient(#f6f6f6,#ececec 45%,#dcdcdc 50%,#d6d6d6);border:1px solid #8e8e8e;border-bottom:none;border-radius:2px 2px 0 0"></div>
<div class="p" style="left:115px;top:594px;font-size:13px;line-height:16px;color:#111">内存 2</div>
<div style="left:94px;top:596px;width:16px;height:12px;background:linear-gradient(90deg,#f0c020 4px,#ccc 4px,#eee);border:1px solid #777;border-radius:2px"></div>
<div style="left:164px;top:591px;width:79px;height:22px;background:linear-gradient(#f6f6f6,#ececec 45%,#dcdcdc 50%,#d6d6d6);border:1px solid #8e8e8e;border-bottom:none;border-radius:2px 2px 0 0"></div>
<div class="p" style="left:194px;top:594px;font-size:13px;line-height:16px;color:#111">内存 3</div>
<div style="left:173px;top:596px;width:16px;height:12px;background:linear-gradient(90deg,#f0c020 4px,#ccc 4px,#eee);border:1px solid #777;border-radius:2px"></div>
<div style="left:244px;top:591px;width:79px;height:22px;background:linear-gradient(#f6f6f6,#ececec 45%,#dcdcdc 50%,#d6d6d6);border:1px solid #8e8e8e;border-bottom:none;border-radius:2px 2px 0 0"></div>
<div class="p" style="left:274px;top:594px;font-size:13px;line-height:16px;color:#111">内存 4</div>
<div style="left:253px;top:596px;width:16px;height:12px;background:linear-gradient(90deg,#f0c020 4px,#ccc 4px,#eee);border:1px solid #777;border-radius:2px"></div>
<div style="left:325px;top:591px;width:78px;height:22px;background:linear-gradient(#f6f6f6,#ececec 45%,#dcdcdc 50%,#d6d6d6);border:1px solid #8e8e8e;border-bottom:none;border-radius:2px 2px 0 0"></div>
<div class="p" style="left:355px;top:594px;font-size:13px;line-height:16px;color:#111">内存 5</div>
<div style="left:334px;top:596px;width:16px;height:12px;background:linear-gradient(90deg,#f0c020 4px,#ccc 4px,#eee);border:1px solid #777;border-radius:2px"></div>
<div style="left:405px;top:591px;width:72px;height:22px;background:linear-gradient(#f6f6f6,#ececec 45%,#dcdcdc 50%,#d6d6d6);border:1px solid #8e8e8e;border-bottom:none;border-radius:2px 2px 0 0"></div>
<div class="p" style="left:435px;top:594px;font-size:13px;line-height:16px;color:#111">监视 1</div>
<div style="left:415px;top:594px;width:16px;height:15px;border-radius:50%;background:radial-gradient(circle at 50% 60%,#f2c98a,#c8843a)"></div>
<div style="left:5px;top:589px;width:80px;height:25px;background:#fff;border:1px solid #a5a5a5;border-bottom:none;border-radius:2px 2px 0 0"></div>
<div class="p" style="left:35px;top:593px;font-size:13px;line-height:16px;color:#111">内存 1</div>
<div style="left:14px;top:595px;width:16px;height:12px;background:linear-gradient(90deg,#f0c020 4px,#ccc 4px,#eee);border:1px solid #777;border-radius:2px"></div>
<div style="left:470px;top:591px;width:13px;height:22px;background:linear-gradient(#fbfbfb,#e5e5e5);border:1px solid #b5b5b5;border-radius:2px"></div>
<div style="left:474px;top:597px;width:6px;height:10px;background:#000;clip-path:polygon(0 0,100% 50%,0 100%)"></div>
<div style="left:3px;top:613px;width:752px;height:186px;background:#f0f0f0;border:1px solid #a0a0a0"></div>
<div style="left:6px;top:614px;width:743px;height:180px;background:#fff8f0;border:1px solid #a0a0a0;overflow:hidden">
<div style="left:0;top:0;width:726px;height:15px;background:linear-gradient(#d2d2d2,#bcbcbc);border-bottom:1px solid #999"></div>
<div class="p" style="left:4px;top:1px;font-size:11px;line-height:13px;color:#222">地址</div>
<div class="p" style="left:124px;top:1px;font-size:11px;line-height:13px;color:#222">十六进制</div>
<div class="p" style="left:461px;top:1px;font-size:11px;line-height:13px;color:#222">ASCII</div>
<div style="left:120px;top:0;width:2px;height:15px;background:#eee;border-left:1px solid #888"></div>
<div style="left:456px;top:0;width:2px;height:15px;background:#eee;border-left:1px solid #888"></div>
<div style="left:577px;top:0;width:2px;height:15px;background:#eee;border-left:1px solid #888"></div>
<div style="left:120px;top:15px;width:1px;height:165px;background:#808080"></div>
<div style="left:205px;top:15px;width:1px;height:165px;background:#808080"></div>
<div style="left:289px;top:15px;width:1px;height:165px;background:#808080"></div>
<div style="left:373px;top:15px;width:1px;height:165px;background:#808080"></div>
<div style="left:456px;top:15px;width:1px;height:165px;background:#808080"></div>
<div style="left:577px;top:15px;width:1px;height:165px;background:#808080"></div>
<div style="left:124px;top:16px;width:18px;height:11px;background:#c0c0c0"></div>
<div style="left:461px;top:16px;width:8px;height:11px;background:#c0c0c0"></div>
<div class="p mono" style="left:5px;top:15px;font-size:11.6px;line-height:12px;color:#000">0000000077331000</div>
<div class="p mono" style="left:126px;top:15px;font-size:11.6px;line-height:12px;color:#000;word-spacing:0px">8B B3 90 00 00 00 C1 EE 15 F7 D6 41 23 F4 E9 F9</div>
<div class="p mono" style="left:462px;top:15px;font-size:11.6px;line-height:12px;color:#000;width:7px;text-align:center">◇</div>
<div class="p mono" style="left:469px;top:15px;font-size:11.6px;line-height:12px;color:#000;width:7px;text-align:center">˟</div>
<div class="p mono" style="left:476px;top:15px;font-size:11.6px;line-height:12px;color:#000;width:7px;text-align:center">◇</div>
<div class="p mono" style="left:483px;top:15px;font-size:11.6px;line-height:12px;color:#000;width:7px;text-align:center">•</div>
<div class="p mono" style="left:490px;top:15px;font-size:11.6px;line-height:12px;color:#000;width:7px;text-align:center">•</div>
<div class="p mono" style="left:497px;top:15px;font-size:11.6px;line-height:12px;color:#000;width:7px;text-align:center">•</div>
<div class="p mono" style="left:504px;top:15px;font-size:11.6px;line-height:12px;color:#000;width:7px;text-align:center">Á</div>
<div class="p mono" style="left:511px;top:15px;font-size:11.6px;line-height:12px;color:#000;width:7px;text-align:center">Î</div>
<div class="p mono" style="left:518px;top:15px;font-size:11.6px;line-height:12px;color:#000;width:7px;text-align:center">◇</div>
<div class="p mono" style="left:525px;top:15px;font-size:11.6px;line-height:12px;color:#000;width:7px;text-align:center">÷</div>
<div class="p mono" style="left:532px;top:15px;font-size:11.6px;line-height:12px;color:#000;width:7px;text-align:center">Ö</div>
<div class="p mono" style="left:539px;top:15px;font-size:11.6px;line-height:12px;color:#000;width:7px;text-align:center">A</div>
<div class="p mono" style="left:546px;top:15px;font-size:11.6px;line-height:12px;color:#000;width:7px;text-align:center">#</div>
<div class="p mono" style="left:553px;top:15px;font-size:11.6px;line-height:12px;color:#000;width:7px;text-align:center">ô</div>
<div class="p mono" style="left:560px;top:15px;font-size:11.6px;line-height:12px;color:#000;width:7px;text-align:center">é</div>
<div class="p mono" style="left:567px;top:15px;font-size:11.6px;line-height:12px;color:#000;width:7px;text-align:center">ù</div>
<div class="p mono" style="left:5px;top:26px;font-size:11.6px;line-height:12px;color:#000">0000000077331010</div>
<div class="p mono" style="left:126px;top:26px;font-size:11.6px;line-height:12px;color:#000;word-spacing:0px">4F 01 00 B8 02 00 00 00 F0 0F C1 03 80 3C 25 84</div>
<div class="p mono" style="left:462px;top:26px;font-size:11.6px;line-height:12px;color:#000;width:7px;text-align:center">O</div>
<div class="p mono" style="left:469px;top:26px;font-size:11.6px;line-height:12px;color:#000;width:7px;text-align:center">◇</div>
<div class="p mono" style="left:476px;top:26px;font-size:11.6px;line-height:12px;color:#000;width:7px;text-align:center">•</div>
<div class="p mono" style="left:483px;top:26px;font-size:11.6px;line-height:12px;color:#000;width:7px;text-align:center">¸</div>
<div class="p mono" style="left:490px;top:26px;font-size:11.6px;line-height:12px;color:#000;width:7px;text-align:center">◇</div>
<div class="p mono" style="left:497px;top:26px;font-size:11.6px;line-height:12px;color:#000;width:7px;text-align:center">•</div>
<div class="p mono" style="left:504px;top:26px;font-size:11.6px;line-height:12px;color:#000;width:7px;text-align:center">•</div>
<div class="p mono" style="left:511px;top:26px;font-size:11.6px;line-height:12px;color:#000;width:7px;text-align:center">•</div>
<div class="p mono" style="left:518px;top:26px;font-size:11.6px;line-height:12px;color:#000;width:7px;text-align:center">ð</div>
<div class="p mono" style="left:525px;top:26px;font-size:11.6px;line-height:12px;color:#000;width:7px;text-align:center">◇</div>
<div class="p mono" style="left:532px;top:26px;font-size:11.6px;line-height:12px;color:#000;width:7px;text-align:center">Á</div>
<div class="p mono" style="left:539px;top:26px;font-size:11.6px;line-height:12px;color:#000;width:7px;text-align:center">◇</div>
<div class="p mono" style="left:546px;top:26px;font-size:11.6px;line-height:12px;color:#000;width:7px;text-align:center">◇</div>
<div class="p mono" style="left:553px;top:26px;font-size:11.6px;line-height:12px;color:#000;width:7px;text-align:center">&lt;</div>
<div class="p mono" style="left:560px;top:26px;font-size:11.6px;line-height:12px;color:#000;width:7px;text-align:center">%</div>
<div class="p mono" style="left:567px;top:26px;font-size:11.6px;line-height:12px;color:#000;width:7px;text-align:center">◇</div>
<div class="p mono" style="left:5px;top:37px;font-size:11.6px;line-height:12px;color:#000">0000000077331020</div>
<div class="p mono" style="left:126px;top:37px;font-size:11.6px;line-height:12px;color:#000;word-spacing:0px">03 FE 7F 00 0F 85 4E 62 07 00 44 8B 83 A8 00 00</div>
<div class="p mono" style="left:462px;top:37px;font-size:11.6px;line-height:12px;color:#000;width:7px;text-align:center">◇</div>
<div class="p mono" style="left:469px;top:37px;font-size:11.6px;line-height:12px;color:#000;width:7px;text-align:center">þ</div>
<div class="p mono" style="left:476px;top:37px;font-size:11.6px;line-height:12px;color:#000;width:7px;text-align:center">◇</div>
<div class="p mono" style="left:483px;top:37px;font-size:11.6px;line-height:12px;color:#000;width:7px;text-align:center">•</div>
<div class="p mono" style="left:490px;top:37px;font-size:11.6px;line-height:12px;color:#000;width:7px;text-align:center">◇</div>
<div class="p mono" style="left:497px;top:37px;font-size:11.6px;line-height:12px;color:#000;width:7px;text-align:center">◇</div>
<div class="p mono" style="left:504px;top:37px;font-size:11.6px;line-height:12px;color:#000;width:7px;text-align:center">N</div>
<div class="p mono" style="left:511px;top:37px;font-size:11.6px;line-height:12px;color:#000;width:7px;text-align:center">b</div>
<div class="p mono" style="left:518px;top:37px;font-size:11.6px;line-height:12px;color:#000;width:7px;text-align:center">◇</div>
<div class="p mono" style="left:525px;top:37px;font-size:11.6px;line-height:12px;color:#000;width:7px;text-align:center">•</div>
<div class="p mono" style="left:532px;top:37px;font-size:11.6px;line-height:12px;color:#000;width:7px;text-align:center">D</div>
<div class="p mono" style="left:539px;top:37px;font-size:11.6px;line-height:12px;color:#000;width:7px;text-align:center">◇</div>
<div class="p mono" style="left:546px;top:37px;font-size:11.6px;line-height:12px;color:#000;width:7px;text-align:center">◇</div>
<div class="p mono" style="left:553px;top:37px;font-size:11.6px;line-height:12px;color:#000;width:7px;text-align:center">¨</div>
<div class="p mono" style="left:560px;top:37px;font-size:11.6px;line-height:12px;color:#000;width:7px;text-align:center">•</div>
<div class="p mono" style="left:567px;top:37px;font-size:11.6px;line-height:12px;color:#000;width:7px;text-align:center">•</div>
<div class="p mono" style="left:5px;top:48px;font-size:11.6px;line-height:12px;color:#000">0000000077331030</div>
<div class="p mono" style="left:126px;top:48px;font-size:11.6px;line-height:12px;color:#000;word-spacing:0px">00 48 8B 53 78 48 8D 8B B0 00 00 00 45 33 C9 E8</div>
<div class="p mono" style="left:462px;top:48px;font-size:11.6px;line-height:12px;color:#000;width:7px;text-align:center">•</div>
<div class="p mono" style="left:469px;top:48px;font-size:11.6px;line-height:12px;color:#000;width:7px;text-align:center">H</div>
<div class="p mono" style="left:476px;top:48px;font-size:11.6px;line-height:12px;color:#000;width:7px;text-align:center">◇</div>
<div class="p mono" style="left:483px;top:48px;font-size:11.6px;line-height:12px;color:#000;width:7px;text-align:center">S</div>
<div class="p mono" style="left:490px;top:48px;font-size:11.6px;line-height:12px;color:#000;width:7px;text-align:center">x</div>
<div class="p mono" style="left:497px;top:48px;font-size:11.6px;line-height:12px;color:#000;width:7px;text-align:center">H</div>
<div class="p mono" style="left:504px;top:48px;font-size:11.6px;line-height:12px;color:#000;width:7px;text-align:center">◇</div>
<div class="p mono" style="left:511px;top:48px;font-size:11.6px;line-height:12px;color:#000;width:7px;text-align:center">◇</div>
<div class="p mono" style="left:518px;top:48px;font-size:11.6px;line-height:12px;color:#000;width:7px;text-align:center">°</div>
<div class="p mono" style="left:525px;top:48px;font-size:11.6px;line-height:12px;color:#000;width:7px;text-align:center">•</div>
<div class="p mono" style="left:532px;top:48px;font-size:11.6px;line-height:12px;color:#000;width:7px;text-align:center">•</div>
<div class="p mono" style="left:539px;top:48px;font-size:11.6px;line-height:12px;color:#000;width:7px;text-align:center">•</div>
<div class="p mono" style="left:546px;top:48px;font-size:11.6px;line-height:12px;color:#000;width:7px;text-align:center">E</div>
<div class="p mono" style="left:553px;top:48px;font-size:11.6px;line-height:12px;color:#000;width:7px;text-align:center">3</div>
<div class="p mono" style="left:560px;top:48px;font-size:11.6px;line-height:12px;color:#000;width:7px;text-align:center">É</div>
<div class="p mono" style="left:567px;top:48px;font-size:11.6px;line-height:12px;color:#000;width:7px;text-align:center">è</div>
<div class="p mono" style="left:5px;top:59px;font-size:11.6px;line-height:12px;color:#000">0000000077331040</div>
<div class="p mono" style="left:126px;top:59px;font-size:11.6px;line-height:12px;color:#000;word-spacing:0px">2C FD 01 00 F0 83 03 FF 0F 85 DB 4F 01 00 E9 4C</div>
<div class="p mono" style="left:462px;top:59px;font-size:11.6px;line-height:12px;color:#000;width:7px;text-align:center">,</div>
<div class="p mono" style="left:469px;top:59px;font-size:11.6px;line-height:12px;color:#000;width:7px;text-align:center">ý</div>
<div class="p mono" style="left:476px;top:59px;font-size:11.6px;line-height:12px;color:#000;width:7px;text-align:center">◇</div>
<div class="p mono" style="left:483px;top:59px;font-size:11.6px;line-height:12px;color:#000;width:7px;text-align:center">•</div>
<div class="p mono" style="left:490px;top:59px;font-size:11.6px;line-height:12px;color:#000;width:7px;text-align:center">ð</div>
<div class="p mono" style="left:497px;top:59px;font-size:11.6px;line-height:12px;color:#000;width:7px;text-align:center">◇</div>
<div class="p mono" style="left:504px;top:59px;font-size:11.6px;line-height:12px;color:#000;width:7px;text-align:center">◇</div>
<div class="p mono" style="left:511px;top:59px;font-size:11.6px;line-height:12px;color:#000;width:7px;text-align:center">ÿ</div>
<div class="p mono" style="left:518px;top:59px;font-size:11.6px;line-height:12px;color:#000;width:7px;text-align:center">◇</div>
<div class="p mono" style="left:525px;top:59px;font-size:11.6px;line-height:12px;color:#000;width:7px;text-align:center">◇</div>
<div class="p mono" style="left:532px;top:59px;font-size:11.6px;line-height:12px;color:#000;width:7px;text-align:center">Û</div>
<div class="p mono" style="left:539px;top:59px;font-size:11.6px;line-height:12px;color:#000;width:7px;text-align:center">O</div>
<div class="p mono" style="left:546px;top:59px;font-size:11.6px;line-height:12px;color:#000;width:7px;text-align:center">◇</div>
<div class="p mono" style="left:553px;top:59px;font-size:11.6px;line-height:12px;color:#000;width:7px;text-align:center">•</div>
<div class="p mono" style="left:560px;top:59px;font-size:11.6px;line-height:12px;color:#000;width:7px;text-align:center">é</div>
<div class="p mono" style="left:567px;top:59px;font-size:11.6px;line-height:12px;color:#000;width:7px;text-align:center">L</div>
<div class="p mono" style="left:5px;top:70px;font-size:11.6px;line-height:12px;color:#000">0000000077331050</div>
<div class="p mono" style="left:126px;top:70px;font-size:11.6px;line-height:12px;color:#000;word-spacing:0px">62 07 00 48 8B 40 48 48 39 41 10 0F 84 46 E8 05</div>
<div class="p mono" style="left:462px;top:70px;font-size:11.6px;line-height:12px;color:#000;width:7px;text-align:center">b</div>
<div class="p mono" style="left:469px;top:70px;font-size:11.6px;line-height:12px;color:#000;width:7px;text-align:center">◇</div>
<div class="p mono" style="left:476px;top:70px;font-size:11.6px;line-height:12px;color:#000;width:7px;text-align:center">•</div>
<div class="p mono" style="left:483px;top:70px;font-size:11.6px;line-height:12px;color:#000;width:7px;text-align:center">H</div>
<div class="p mono" style="left:490px;top:70px;font-size:11.6px;line-height:12px;color:#000;width:7px;text-align:center">◇</div>
<div class="p mono" style="left:497px;top:70px;font-size:11.6px;line-height:12px;color:#000;width:7px;text-align:center">@</div>
<div class="p mono" style="left:504px;top:70px;font-size:11.6px;line-height:12px;color:#000;width:7px;text-align:center">H</div>
<div class="p mono" style="left:511px;top:70px;font-size:11.6px;line-height:12px;color:#000;width:7px;text-align:center">H</div>
<div class="p mono" style="left:518px;top:70px;font-size:11.6px;line-height:12px;color:#000;width:7px;text-align:center">9</div>
<div class="p mono" style="left:525px;top:70px;font-size:11.6px;line-height:12px;color:#000;width:7px;text-align:center">A</div>
<div class="p mono" style="left:532px;top:70px;font-size:11.6px;line-height:12px;color:#000;width:7px;text-align:center">◇</div>
<div class="p mono" style="left:539px;top:70px;font-size:11.6px;line-height:12px;color:#000;width:7px;text-align:center">◇</div>
<div class="p mono" style="left:546px;top:70px;font-size:11.6px;line-height:12px;color:#000;width:7px;text-align:center">◇</div>
<div class="p mono" style="left:553px;top:70px;font-size:11.6px;line-height:12px;color:#000;width:7px;text-align:center">F</div>
<div class="p mono" style="left:560px;top:70px;font-size:11.6px;line-height:12px;color:#000;width:7px;text-align:center">è</div>
<div class="p mono" style="left:567px;top:70px;font-size:11.6px;line-height:12px;color:#000;width:7px;text-align:center">◇</div>
<div class="p mono" style="left:5px;top:81px;font-size:11.6px;line-height:12px;color:#000">0000000077331060</div>
<div class="p mono" style="left:126px;top:81px;font-size:11.6px;line-height:12px;color:#000;word-spacing:0px">00 E8 4A 65 02 00 84 C0 0F 85 41 E8 05 00 48 8B</div>
<div class="p mono" style="left:462px;top:81px;font-size:11.6px;line-height:12px;color:#000;width:7px;text-align:center">•</div>
<div class="p mono" style="left:469px;top:81px;font-size:11.6px;line-height:12px;color:#000;width:7px;text-align:center">è</div>
<div class="p mono" style="left:476px;top:81px;font-size:11.6px;line-height:12px;color:#000;width:7px;text-align:center">J</div>
<div class="p mono" style="left:483px;top:81px;font-size:11.6px;line-height:12px;color:#000;width:7px;text-align:center">e</div>
<div class="p mono" style="left:490px;top:81px;font-size:11.6px;line-height:12px;color:#000;width:7px;text-align:center">◇</div>
<div class="p mono" style="left:497px;top:81px;font-size:11.6px;line-height:12px;color:#000;width:7px;text-align:center">•</div>
<div class="p mono" style="left:504px;top:81px;font-size:11.6px;line-height:12px;color:#000;width:7px;text-align:center">◇</div>
<div class="p mono" style="left:511px;top:81px;font-size:11.6px;line-height:12px;color:#000;width:7px;text-align:center">À</div>
<div class="p mono" style="left:518px;top:81px;font-size:11.6px;line-height:12px;color:#000;width:7px;text-align:center">◇</div>
<div class="p mono" style="left:525px;top:81px;font-size:11.6px;line-height:12px;color:#000;width:7px;text-align:center">◇</div>
<div class="p mono" style="left:532px;top:81px;font-size:11.6px;line-height:12px;color:#000;width:7px;text-align:center">A</div>
<div class="p mono" style="left:539px;top:81px;font-size:11.6px;line-height:12px;color:#000;width:7px;text-align:center">è</div>
<div class="p mono" style="left:546px;top:81px;font-size:11.6px;line-height:12px;color:#000;width:7px;text-align:center">◇</div>
<div class="p mono" style="left:553px;top:81px;font-size:11.6px;line-height:12px;color:#000;width:7px;text-align:center">•</div>
<div class="p mono" style="left:560px;top:81px;font-size:11.6px;line-height:12px;color:#000;width:7px;text-align:center">H</div>
<div class="p mono" style="left:567px;top:81px;font-size:11.6px;line-height:12px;color:#000;width:7px;text-align:center">◇</div>
<div class="p mono" style="left:5px;top:92px;font-size:11.6px;line-height:12px;color:#000">0000000077331070</div>
<div class="p mono" style="left:126px;top:92px;font-size:11.6px;line-height:12px;color:#000;word-spacing:0px">8E 68 01 00 00 E8 46 1F 05 00 41 BA 01 00 00 00</div>
<div class="p mono" style="left:462px;top:92px;font-size:11.6px;line-height:12px;color:#000;width:7px;text-align:center">◇</div>
<div class="p mono" style="left:469px;top:92px;font-size:11.6px;line-height:12px;color:#000;width:7px;text-align:center">h</div>
<div class="p mono" style="left:476px;top:92px;font-size:11.6px;line-height:12px;color:#000;width:7px;text-align:center">◇</div>
<div class="p mono" style="left:483px;top:92px;font-size:11.6px;line-height:12px;color:#000;width:7px;text-align:center">•</div>
<div class="p mono" style="left:490px;top:92px;font-size:11.6px;line-height:12px;color:#000;width:7px;text-align:center">•</div>
<div class="p mono" style="left:497px;top:92px;font-size:11.6px;line-height:12px;color:#000;width:7px;text-align:center">è</div>
<div class="p mono" style="left:504px;top:92px;font-size:11.6px;line-height:12px;color:#000;width:7px;text-align:center">F</div>
<div class="p mono" style="left:511px;top:92px;font-size:11.6px;line-height:12px;color:#000;width:7px;text-align:center">◇</div>
<div class="p mono" style="left:518px;top:92px;font-size:11.6px;line-height:12px;color:#000;width:7px;text-align:center">◇</div>
<div class="p mono" style="left:525px;top:92px;font-size:11.6px;line-height:12px;color:#000;width:7px;text-align:center">•</div>
<div class="p mono" style="left:532px;top:92px;font-size:11.6px;line-height:12px;color:#000;width:7px;text-align:center">A</div>
<div class="p mono" style="left:539px;top:92px;font-size:11.6px;line-height:12px;color:#000;width:7px;text-align:center">º</div>
<div class="p mono" style="left:546px;top:92px;font-size:11.6px;line-height:12px;color:#000;width:7px;text-align:center">◇</div>
<div class="p mono" style="left:553px;top:92px;font-size:11.6px;line-height:12px;color:#000;width:7px;text-align:center">•</div>
<div class="p mono" style="left:560px;top:92px;font-size:11.6px;line-height:12px;color:#000;width:7px;text-align:center">•</div>
<div class="p mono" style="left:567px;top:92px;font-size:11.6px;line-height:12px;color:#000;width:7px;text-align:center">•</div>
<div class="p mono" style="left:5px;top:103px;font-size:11.6px;line-height:12px;color:#000">0000000077331080</div>
<div class="p mono" style="left:126px;top:103px;font-size:11.6px;line-height:12px;color:#000;word-spacing:0px">41 8B D2 48 8B CE E8 85 2B 02 00 E9 A7 32 03 00</div>
<div class="p mono" style="left:462px;top:103px;font-size:11.6px;line-height:12px;color:#000;width:7px;text-align:center">A</div>
<div class="p mono" style="left:469px;top:103px;font-size:11.6px;line-height:12px;color:#000;width:7px;text-align:center">◇</div>
<div class="p mono" style="left:476px;top:103px;font-size:11.6px;line-height:12px;color:#000;width:7px;text-align:center">Ò</div>
<div class="p mono" style="left:483px;top:103px;font-size:11.6px;line-height:12px;color:#000;width:7px;text-align:center">H</div>
<div class="p mono" style="left:490px;top:103px;font-size:11.6px;line-height:12px;color:#000;width:7px;text-align:center">◇</div>
<div class="p mono" style="left:497px;top:103px;font-size:11.6px;line-height:12px;color:#000;width:7px;text-align:center">Î</div>
<div class="p mono" style="left:504px;top:103px;font-size:11.6px;line-height:12px;color:#000;width:7px;text-align:center">è</div>
<div class="p mono" style="left:511px;top:103px;font-size:11.6px;line-height:12px;color:#000;width:7px;text-align:center">◇</div>
<div class="p mono" style="left:518px;top:103px;font-size:11.6px;line-height:12px;color:#000;width:7px;text-align:center">+</div>
<div class="p mono" style="left:525px;top:103px;font-size:11.6px;line-height:12px;color:#000;width:7px;text-align:center">◇</div>
<div class="p mono" style="left:532px;top:103px;font-size:11.6px;line-height:12px;color:#000;width:7px;text-align:center">•</div>
<div class="p mono" style="left:539px;top:103px;font-size:11.6px;line-height:12px;color:#000;width:7px;text-align:center">é</div>
<div class="p mono" style="left:546px;top:103px;font-size:11.6px;line-height:12px;color:#000;width:7px;text-align:center">§</div>
<div class="p mono" style="left:553px;top:103px;font-size:11.6px;line-height:12px;color:#000;width:7px;text-align:center">2</div>
<div class="p mono" style="left:560px;top:103px;font-size:11.6px;line-height:12px;color:#000;width:7px;text-align:center">◇</div>
<div class="p mono" style="left:567px;top:103px;font-size:11.6px;line-height:12px;color:#000;width:7px;text-align:center">•</div>
<div class="p mono" style="left:5px;top:114px;font-size:11.6px;line-height:12px;color:#000">0000000077331090</div>
<div class="p mono" style="left:126px;top:114px;font-size:11.6px;line-height:12px;color:#000;word-spacing:0px">48 89 5F 10 48 89 3B 44 89 6F 30 E9 2F D3 00 00</div>
<div class="p mono" style="left:462px;top:114px;font-size:11.6px;line-height:12px;color:#000;width:7px;text-align:center">H</div>
<div class="p mono" style="left:469px;top:114px;font-size:11.6px;line-height:12px;color:#000;width:7px;text-align:center">◇</div>
<div class="p mono" style="left:476px;top:114px;font-size:11.6px;line-height:12px;color:#000;width:7px;text-align:center">_</div>
<div class="p mono" style="left:483px;top:114px;font-size:11.6px;line-height:12px;color:#000;width:7px;text-align:center">◇</div>
<div class="p mono" style="left:490px;top:114px;font-size:11.6px;line-height:12px;color:#000;width:7px;text-align:center">H</div>
<div class="p mono" style="left:497px;top:114px;font-size:11.6px;line-height:12px;color:#000;width:7px;text-align:center">◇</div>
<div class="p mono" style="left:504px;top:114px;font-size:11.6px;line-height:12px;color:#000;width:7px;text-align:center">;</div>
<div class="p mono" style="left:511px;top:114px;font-size:11.6px;line-height:12px;color:#000;width:7px;text-align:center">D</div>
<div class="p mono" style="left:518px;top:114px;font-size:11.6px;line-height:12px;color:#000;width:7px;text-align:center">◇</div>
<div class="p mono" style="left:525px;top:114px;font-size:11.6px;line-height:12px;color:#000;width:7px;text-align:center">o</div>
<div class="p mono" style="left:532px;top:114px;font-size:11.6px;line-height:12px;color:#000;width:7px;text-align:center">0</div>
<div class="p mono" style="left:539px;top:114px;font-size:11.6px;line-height:12px;color:#000;width:7px;text-align:center">é</div>
<div class="p mono" style="left:546px;top:114px;font-size:11.6px;line-height:12px;color:#000;width:7px;text-align:center">/</div>
<div class="p mono" style="left:553px;top:114px;font-size:11.6px;line-height:12px;color:#000;width:7px;text-align:center">Ó</div>
<div class="p mono" style="left:560px;top:114px;font-size:11.6px;line-height:12px;color:#000;width:7px;text-align:center">•</div>
<div class="p mono" style="left:567px;top:114px;font-size:11.6px;line-height:12px;color:#000;width:7px;text-align:center">•</div>
<div class="p mono" style="left:5px;top:125px;font-size:11.6px;line-height:12px;color:#000">00000000773310A0</div>
<div class="p mono" style="left:126px;top:125px;font-size:11.6px;line-height:12px;color:#000;word-spacing:0px">33 C0 48 83 C4 28 C3 48 8B 5C 24 08 33 C0 C3 44</div>
<div class="p mono" style="left:462px;top:125px;font-size:11.6px;line-height:12px;color:#000;width:7px;text-align:center">3</div>
<div class="p mono" style="left:469px;top:125px;font-size:11.6px;line-height:12px;color:#000;width:7px;text-align:center">À</div>
<div class="p mono" style="left:476px;top:125px;font-size:11.6px;line-height:12px;color:#000;width:7px;text-align:center">H</div>
<div class="p mono" style="left:483px;top:125px;font-size:11.6px;line-height:12px;color:#000;width:7px;text-align:center">◇</div>
<div class="p mono" style="left:490px;top:125px;font-size:11.6px;line-height:12px;color:#000;width:7px;text-align:center">Ä</div>
<div class="p mono" style="left:497px;top:125px;font-size:11.6px;line-height:12px;color:#000;width:7px;text-align:center">(</div>
<div class="p mono" style="left:504px;top:125px;font-size:11.6px;line-height:12px;color:#000;width:7px;text-align:center">Ã</div>
<div class="p mono" style="left:511px;top:125px;font-size:11.6px;line-height:12px;color:#000;width:7px;text-align:center">H</div>
<div class="p mono" style="left:518px;top:125px;font-size:11.6px;line-height:12px;color:#000;width:7px;text-align:center">◇</div>
<div class="p mono" style="left:525px;top:125px;font-size:11.6px;line-height:12px;color:#000;width:7px;text-align:center">\</div>
<div class="p mono" style="left:532px;top:125px;font-size:11.6px;line-height:12px;color:#000;width:7px;text-align:center">$</div>
<div class="p mono" style="left:539px;top:125px;font-size:11.6px;line-height:12px;color:#000;width:7px;text-align:center">◇</div>
<div class="p mono" style="left:546px;top:125px;font-size:11.6px;line-height:12px;color:#000;width:7px;text-align:center">3</div>
<div class="p mono" style="left:553px;top:125px;font-size:11.6px;line-height:12px;color:#000;width:7px;text-align:center">À</div>
<div class="p mono" style="left:560px;top:125px;font-size:11.6px;line-height:12px;color:#000;width:7px;text-align:center">Ã</div>
<div class="p mono" style="left:567px;top:125px;font-size:11.6px;line-height:12px;color:#000;width:7px;text-align:center">D</div>
<div class="p mono" style="left:5px;top:136px;font-size:11.6px;line-height:12px;color:#000">00000000773310B0</div>
<div class="p mono" style="left:126px;top:136px;font-size:11.6px;line-height:12px;color:#000;word-spacing:0px">8B D3 44 8B DB E9 0C 44 00 00 90 90 0F B7 47 E6</div>
<div class="p mono" style="left:462px;top:136px;font-size:11.6px;line-height:12px;color:#000;width:7px;text-align:center">◇</div>
<div class="p mono" style="left:469px;top:136px;font-size:11.6px;line-height:12px;color:#000;width:7px;text-align:center">Ó</div>
<div class="p mono" style="left:476px;top:136px;font-size:11.6px;line-height:12px;color:#000;width:7px;text-align:center">D</div>
<div class="p mono" style="left:483px;top:136px;font-size:11.6px;line-height:12px;color:#000;width:7px;text-align:center">◇</div>
<div class="p mono" style="left:490px;top:136px;font-size:11.6px;line-height:12px;color:#000;width:7px;text-align:center">Û</div>
<div class="p mono" style="left:497px;top:136px;font-size:11.6px;line-height:12px;color:#000;width:7px;text-align:center">é</div>
<div class="p mono" style="left:504px;top:136px;font-size:11.6px;line-height:12px;color:#000;width:7px;text-align:center">◇</div>
<div class="p mono" style="left:511px;top:136px;font-size:11.6px;line-height:12px;color:#000;width:7px;text-align:center">D</div>
<div class="p mono" style="left:518px;top:136px;font-size:11.6px;line-height:12px;color:#000;width:7px;text-align:center">•</div>
<div class="p mono" style="left:525px;top:136px;font-size:11.6px;line-height:12px;color:#000;width:7px;text-align:center">•</div>
<div class="p mono" style="left:532px;top:136px;font-size:11.6px;line-height:12px;color:#000;width:7px;text-align:center">◇</div>
<div class="p mono" style="left:539px;top:136px;font-size:11.6px;line-height:12px;color:#000;width:7px;text-align:center">◇</div>
<div class="p mono" style="left:546px;top:136px;font-size:11.6px;line-height:12px;color:#000;width:7px;text-align:center">◇</div>
<div class="p mono" style="left:553px;top:136px;font-size:11.6px;line-height:12px;color:#000;width:7px;text-align:center">·</div>
<div class="p mono" style="left:560px;top:136px;font-size:11.6px;line-height:12px;color:#000;width:7px;text-align:center">G</div>
<div class="p mono" style="left:567px;top:136px;font-size:11.6px;line-height:12px;color:#000;width:7px;text-align:center">æ</div>
<div class="p mono" style="left:5px;top:147px;font-size:11.6px;line-height:12px;color:#000">00000000773310C0</div>
<div class="p mono" style="left:126px;top:147px;font-size:11.6px;line-height:12px;color:#000;word-spacing:0px">0F B6 0C 18 44 0F B7 0C 4E 66 41 83 F9 61 0F 82</div>
<div class="p mono" style="left:462px;top:147px;font-size:11.6px;line-height:12px;color:#000;width:7px;text-align:center">◇</div>
<div class="p mono" style="left:469px;top:147px;font-size:11.6px;line-height:12px;color:#000;width:7px;text-align:center">¶</div>
<div class="p mono" style="left:476px;top:147px;font-size:11.6px;line-height:12px;color:#000;width:7px;text-align:center">◇</div>
<div class="p mono" style="left:483px;top:147px;font-size:11.6px;line-height:12px;color:#000;width:7px;text-align:center">◇</div>
<div class="p mono" style="left:490px;top:147px;font-size:11.6px;line-height:12px;color:#000;width:7px;text-align:center">D</div>
<div class="p mono" style="left:497px;top:147px;font-size:11.6px;line-height:12px;color:#000;width:7px;text-align:center">◇</div>
<div class="p mono" style="left:504px;top:147px;font-size:11.6px;line-height:12px;color:#000;width:7px;text-align:center">·</div>
<div class="p mono" style="left:511px;top:147px;font-size:11.6px;line-height:12px;color:#000;width:7px;text-align:center">◇</div>
<div class="p mono" style="left:518px;top:147px;font-size:11.6px;line-height:12px;color:#000;width:7px;text-align:center">N</div>
<div class="p mono" style="left:525px;top:147px;font-size:11.6px;line-height:12px;color:#000;width:7px;text-align:center">f</div>
<div class="p mono" style="left:532px;top:147px;font-size:11.6px;line-height:12px;color:#000;width:7px;text-align:center">A</div>
<div class="p mono" style="left:539px;top:147px;font-size:11.6px;line-height:12px;color:#000;width:7px;text-align:center">◇</div>
<div class="p mono" style="left:546px;top:147px;font-size:11.6px;line-height:12px;color:#000;width:7px;text-align:center">ù</div>
<div class="p mono" style="left:553px;top:147px;font-size:11.6px;line-height:12px;color:#000;width:7px;text-align:center">a</div>
<div class="p mono" style="left:560px;top:147px;font-size:11.6px;line-height:12px;color:#000;width:7px;text-align:center">◇</div>
<div class="p mono" style="left:567px;top:147px;font-size:11.6px;line-height:12px;color:#000;width:7px;text-align:center">◇</div>
<div class="p mono" style="left:5px;top:158px;font-size:11.6px;line-height:12px;color:#000">00000000773310D0</div>
<div class="p mono" style="left:126px;top:158px;font-size:11.6px;line-height:12px;color:#000;word-spacing:0px">44 0F B6 0C 18 44 0F B7 0C 4E 66 41 83 F9 61 0F</div>
<div class="p mono" style="left:462px;top:158px;font-size:11.6px;line-height:12px;color:#000;width:7px;text-align:center">D</div>
<div class="p mono" style="left:469px;top:158px;font-size:11.6px;line-height:12px;color:#000;width:7px;text-align:center">◇</div>
<div class="p mono" style="left:476px;top:158px;font-size:11.6px;line-height:12px;color:#000;width:7px;text-align:center">¶</div>
<div class="p mono" style="left:483px;top:158px;font-size:11.6px;line-height:12px;color:#000;width:7px;text-align:center">◇</div>
<div class="p mono" style="left:490px;top:158px;font-size:11.6px;line-height:12px;color:#000;width:7px;text-align:center">◇</div>
<div class="p mono" style="left:497px;top:158px;font-size:11.6px;line-height:12px;color:#000;width:7px;text-align:center">D</div>
<div class="p mono" style="left:504px;top:158px;font-size:11.6px;line-height:12px;color:#000;width:7px;text-align:center">◇</div>
<div class="p mono" style="left:511px;top:158px;font-size:11.6px;line-height:12px;color:#000;width:7px;text-align:center">·</div>
<div class="p mono" style="left:518px;top:158px;font-size:11.6px;line-height:12px;color:#000;width:7px;text-align:center">◇</div>
<div class="p mono" style="left:525px;top:158px;font-size:11.6px;line-height:12px;color:#000;width:7px;text-align:center">N</div>
<div class="p mono" style="left:532px;top:158px;font-size:11.6px;line-height:12px;color:#000;width:7px;text-align:center">f</div>
<div class="p mono" style="left:539px;top:158px;font-size:11.6px;line-height:12px;color:#000;width:7px;text-align:center">A</div>
<div class="p mono" style="left:546px;top:158px;font-size:11.6px;line-height:12px;color:#000;width:7px;text-align:center">◇</div>
<div class="p mono" style="left:553px;top:158px;font-size:11.6px;line-height:12px;color:#000;width:7px;text-align:center">ù</div>
<div class="p mono" style="left:560px;top:158px;font-size:11.6px;line-height:12px;color:#000;width:7px;text-align:center">a</div>
<div class="p mono" style="left:567px;top:158px;font-size:11.6px;line-height:12px;color:#000;width:7px;text-align:center">◇</div>
<div style="left:726px;top:0;width:16px;height:162px;background:#f0f0f0"></div>
<div style="left:730px;top:6px;width:8px;height:5px;background:#555;clip-path:polygon(50% 0,100% 100%,0 100%)"></div>
<div style="left:728px;top:18px;width:13px;height:16px;background:linear-gradient(90deg,#f4f4f4,#dcdcdc);border:1px solid #999;border-radius:2px"></div>
<div style="left:730px;top:152px;width:8px;height:5px;background:#555;clip-path:polygon(0 0,100% 0,50% 100%)"></div>
<div style="left:0;top:162px;width:743px;height:18px;background:#f0f0f0"></div>
<div style="left:6px;top:167px;width:5px;height:8px;background:#555;clip-path:polygon(100% 0,0 50%,100% 100%)"></div>
<div style="left:19px;top:163px;width:360px;height:15px;background:linear-gradient(#f6f6f6,#d8d8d8);border:1px solid #999;border-radius:2px"></div>
<div style="left:195px;top:167px;width:7px;height:7px;background:repeating-linear-gradient(90deg,#666 0,#666 1px,transparent 1px,transparent 3px)"></div>
<div style="left:714px;top:167px;width:5px;height:8px;background:#555;clip-path:polygon(0 0,100% 50%,0 100%)"></div>
</div>
<div style="left:0px;top:800px;width:1083px;height:1px;background:#a0a0a0"></div>
<div class="p" style="left:2px;top:807px;font-size:12px;line-height:14px;color:#000">命令:</div>
<div style="left:38px;top:805px;width:720px;height:20px;background:#fff;border:1px solid #c8c8c8;border-radius:2px"></div>
<div style="left:0px;top:827px;width:1083px;height:22px;background:#f0f0f0"></div>
<div style="left:2px;top:830px;width:58px;height:17px;background:#ffff00;border:1px solid #d0d0a0"></div>
<div class="p" style="left:13px;top:830px;font-size:13px;line-height:16px;color:#f00">已暂停</div>
<div style="left:66px;top:830px;width:700px;height:17px;background:#c0c0c0;border:1px solid #909090;border-right:none"></div>
<div class="p" style="left:70px;top:831px;font-size:13px;line-height:16px;color:#000">已到达系统断点!</div>
</div>
<div style="left:1172px;top:82px;width:166px;height:100px;background:linear-gradient(160deg,#0b0d10 0,#1a1d22 40%,#2a2d31 100%);border:1px solid #6a6e74;border-left:none;border-radius:0 7px 0 0"></div>
<div style="left:1229px;top:82px;width:103px;height:19px;border:1px solid #6a6e74;border-top:none;border-radius:0 0 4px 4px;background:linear-gradient(#2e3136,#1a1c20)"></div>
<div style="left:1255px;top:82px;width:1px;height:19px;background:#6a6e74"></div><div style="left:1282px;top:82px;width:1px;height:19px;background:#6a6e74"></div>
<div style="left:1239px;top:92px;width:11px;height:3px;background:#fff"></div>
<div style="left:1265px;top:87px;width:11px;height:8px;border:2px solid #fff;border-top-width:3px"></div>
<div class="p" style="left:1301px;top:83px;font:bold 15px/17px 'Liberation Sans';color:#fff">✕</div>
<div style="left:1172px;top:116px;width:157px;height:22px;background:linear-gradient(#d2d2d2,#c4c4c4);border:1px solid #888;border-left:none;border-radius:0 3px 3px 0"></div>
<div class="p" style="left:1176px;top:119px;font:italic 12px/16px 'Liberation Sans';color:#777">(C:)</div>
<div style="left:1311px;top:119px;width:9px;height:9px;border:2px solid #2a70c0;border-radius:50%"></div><div style="left:1306px;top:129px;width:6px;height:2px;background:#2a70c0;transform:rotate(-45deg)"></div>
<div style="left:1172px;top:145px;width:160px;height:34px;background:linear-gradient(#fdfeff,#e4ebf5);border:1px solid #8a96a6;border-left:none;border-bottom:none"></div>
<div style="left:1209px;top:154px;width:16px;height:14px;background:repeating-linear-gradient(#555 0,#555 2px,transparent 2px,transparent 5px)"></div>
<div style="left:1235px;top:159px;width:8px;height:5px;background:#223;clip-path:polygon(0 0,100% 0,50% 100%)"></div>
<div style="left:1264px;top:154px;width:16px;height:14px;background:linear-gradient(90deg,#fff 60%,#7fc6e8 60%);border:1px solid #6a8aa8"></div>
<div style="left:1299px;top:153px;width:16px;height:16px;border-radius:50%;background:radial-gradient(circle at 40% 35%,#6a8ff0,#1a2f90);border:1px solid #667;color:#fff;font:bold 11px/15px 'Liberation Sans';text-align:center">?</div>
<div style="left:261px;top:147px;width:676px;height:440px;background:linear-gradient(#f4f9fd,#e8f2fb 40%,#e6f0fa);border:1px solid #7b8796;border-radius:7px 7px 5px 5px;box-shadow:0 0 0 1px rgba(255,255,255,0.4) inset"></div>
<div style="left:271px;top:178px;width:660px;height:401px;background:#000"></div>
<div style="left:272px;top:156px;width:15px;height:13px;background:#000;border:1px solid #999;border-top:3px solid #bbb"></div>
<div class="p" style="left:273px;top:159px;font:bold 6px/7px 'Liberation Sans';color:#fff">C:\_</div>
<div class="p" style="left:292px;top:154px;font-size:13px;line-height:16px;color:#000">C:\Windows\System32\cmd.exe</div>
<div style="left:827px;top:147px;width:102px;height:19px;border:1px solid #8f9aa8;border-top:none;border-radius:0 0 4px 4px;background:linear-gradient(#f4f7fa,#e3e9ef)"></div>
<div style="left:853px;top:147px;width:1px;height:18px;background:#9aa4b0"></div><div style="left:880px;top:147px;width:1px;height:18px;background:#9aa4b0"></div>
<div style="left:835px;top:156px;width:11px;height:4px;border:1px solid #555;background:#fff"></div>
<div style="left:862px;top:151px;width:11px;height:10px;border:1px solid #555;box-shadow:inset 0 0 0 2px #fff,inset 0 0 0 3px #555"></div>
<div class="p" style="left:897px;top:148px;font:bold 15px/17px 'Liberation Sans';color:#555;text-shadow:0 0 1px #fff">✕</div>
<div style="left:841px;top:179px;width:1030px;height:763px;background:#1d2126;border:1px solid #5c6168;border-radius:7px 0 0 7px"></div>
<div style="left:848px;top:206px;width:1030px;height:1px;background:#9a9ea4"></div>
<div style="left:847px;top:207px;width:1px;height:729px;background:#2a2c30"></div>
<div style="left:842px;top:936px;width:1030px;height:6px;background:linear-gradient(#0a0c10 0,#0a0c10 2px,#5a6a7a 3px,#2a3440 5px);"></div>
<div style="left:842px;top:207px;width:6px;height:734px;background:linear-gradient(#8a8f95 0,#a5a9ae 100px,#c4c8cc 165px,#202428 178px,#1a1e22 375px,#8fb0d0 392px,#a8c4e0 640px,#2a2e34 650px,#2a2e34 734px)"></div>
<div style="left:842px;top:180px;width:1025px;height:27px;background:linear-gradient(90deg,#aab0b6 0,#d2d6db 40px,#d6d4d8 80px,#d3d3d8 150px,#c9d3de 170px,#c6d2de 305px,#8f9eae 312px,#8f9eae 330px,#b3d2f0 338px,#b5d3f2 488px,#1a1e24 496px,#0d1116 510px,#0d1116 880px,#5a5e63 960px,#5a5e63 1025px);border-radius:6px 0 0 0"></div>
<svg style="position:absolute;left:848px;top:184px" width="18" height="18" viewBox="0 0 18 18"><path d="M2 3l3 3M1 9h4M2 15l3-3M14 2l-3 3M17 9h-4" stroke="#111" stroke-width="1.6"/><ellipse cx="9" cy="9" rx="4.5" ry="5.5" fill="#222"/><circle cx="9" cy="8" r="3.3" fill="#40d8f0" stroke="#0a4a6a" stroke-width=".8"/><path d="M11 11l5 5" stroke="#1a60c0" stroke-width="2.4"/></svg>
<div class="p" style="left:869px;top:184px;font-size:13px;line-height:17px;color:#000">DebugView on \\WIN-TET8S163984 (local)</div>
<div style="left:1794px;top:179px;width:75px;height:20px;border:1px solid #4a4e54;border-top:none;border-radius:0 0 0 4px;background:linear-gradient(#b8bcc2,#6a6f76 50%,#4a4f56)"></div>
<div style="left:1822px;top:179px;width:1px;height:19px;background:#33373c"></div><div style="left:1848px;top:179px;width:21px;height:19px;background:linear-gradient(#e08a7a,#c03a1a 55%,#a02a10)"></div>
<div style="left:1803px;top:189px;width:10px;height:3px;background:#fff"></div>
<div style="left:1830px;top:184px;width:10px;height:9px;border:2px solid #fff;border-top-width:3px"></div>
<div style="left:848px;top:207px;width:1019px;height:729px;background:#fff;overflow:hidden">
<div style="left:0;top:0;width:1019px;height:21px;background:linear-gradient(#fff 0,#f6f8fd 1px,#eef1fa 7px,#d6dcef 8px,#d9dff1 19px);border-bottom:1px solid #b6bccc"></div>
<div class="p" style="left:7px;top:3px;font-size:13px;line-height:15px;color:#000">File</div>
<div class="p" style="left:41px;top:3px;font-size:13px;line-height:15px;color:#000">Edit</div>
<div class="p" style="left:76px;top:3px;font-size:13px;line-height:15px;color:#000">Capture</div>
<div class="p" style="left:136px;top:3px;font-size:13px;line-height:15px;color:#000">Options</div>
<div class="p" style="left:196px;top:3px;font-size:13px;line-height:15px;color:#000">Computer</div>
<div class="p" style="left:268px;top:3px;font-size:13px;line-height:15px;color:#000">Help</div>
<div style="left:0;top:21px;width:1019px;height:29px;background:#f0f0f0;border-top:1px solid #a8a8a8;box-shadow:inset 0 1px 0 #fff;border-bottom:1px solid #646464"></div>
<div style="left:3px;top:23px;width:1px;height:20px;background:#a0a0a0;border-right:1px solid #fff"></div>
<div style="left:87px;top:23px;width:1px;height:20px;background:#a0a0a0;border-right:1px solid #fff"></div>
<div style="left:125px;top:23px;width:1px;height:20px;background:#a0a0a0;border-right:1px solid #fff"></div>
<div style="left:179px;top:23px;width:1px;height:20px;background:#a0a0a0;border-right:1px solid #fff"></div>
<div style="left:217px;top:23px;width:1px;height:20px;background:#a0a0a0;border-right:1px solid #fff"></div>
<div style="left:309px;top:23px;width:1px;height:20px;background:#a0a0a0;border-right:1px solid #fff"></div>
<div style="left:379px;top:23px;width:1px;height:20px;background:#a0a0a0;border-right:1px solid #fff"></div>
<svg style="position:absolute;left:11px;top:26px" width="18" height="16" viewBox="0 0 18 16"><path d="M1 3.5h5l1 1.5h4v3H4.5L1 14z" fill="#ffff80" stroke="#000"/><path d="M1 14l3.5-6.5H16L12.5 14z" fill="#808000" stroke="#000"/><path d="M9 3.5q3-3 6 0.5" stroke="#000" fill="none"/><path d="M14 2.5l1.5 2-2.5 .5z" fill="#000"/></svg>
<svg style="position:absolute;left:34px;top:25px" width="18" height="16" viewBox="0 0 18 16"><rect x="1.5" y="1.5" width="13" height="13" fill="#808000" stroke="#000"/><rect x="4" y="2" width="8" height="5" fill="#e8e8e8" stroke="#000" stroke-width=".6"/><rect x="4" y="9" width="8" height="5.5" fill="#000"/><rect x="9" y="10" width="2" height="3" fill="#fff"/></svg>
<svg style="position:absolute;left:57px;top:25px" width="18" height="16" viewBox="0 0 18 16"><rect x="1.5" y="1.5" width="13" height="13" fill="#808000" stroke="#000"/><rect x="4" y="2" width="8" height="5" fill="#e8e8e8"/><rect x="4" y="9" width="8" height="5.5" fill="#000"/><rect x="0" y="6" width="8" height="3" fill="#fff"/><path d="M3 14L13 3M4 4l9 10" stroke="#e00000" stroke-width="2.2"/></svg>
<svg style="position:absolute;left:103px;top:26px" width="18" height="16" viewBox="0 0 18 16"><circle cx="6" cy="6" r="4.6" fill="#a0f0ff" stroke="#205070" stroke-width="1.4"/><path d="M4 4l3 3" stroke="#fff" stroke-width="1.2"/><path d="M9.5 9.5l5.5 5.5" stroke="#2070c0" stroke-width="2.4"/></svg>
<svg style="position:absolute;left:135px;top:26px" width="18" height="16" viewBox="0 0 18 16"><path d="M8 1l1.5 2 2.5-1 .5 2.5 2.5.5-1 2.5 2 1.5-2 1.5 1 2.5-2.5.5-.5 2.5-2.5-1L8 15l-1.5-2-2.5 1-.5-2.5-2.5-.5 1-2.5L0 8l2-1.5-1-2.5 2.5-.5.5-2.5 2.5 1z" fill="#ffff40" stroke="#404000" stroke-width=".8"/><circle cx="8" cy="8" r="2.5" fill="#d0c000" stroke="#404000" stroke-width=".8"/></svg>
<svg style="position:absolute;left:158px;top:27px" width="18" height="16" viewBox="0 0 18 16"><path d="M1 6h8V2.5L15 7.5 9 12.5V9H1z" fill="#3aa0f8"/></svg>
<svg style="position:absolute;left:186px;top:25px" width="18" height="16" viewBox="0 0 18 16"><rect x="0" y="5" width="5" height="2" fill="#e03030"/><rect x="0" y="8" width="5" height="2" fill="#2040d0"/><rect x="0" y="11" width="5" height="2" fill="#e03030"/><path d="M5 3l5-2v7l-5 1z" fill="#e02020" stroke="#000"/><path d="M10 1l6 1v6l-6 0z" fill="#20b020" stroke="#000"/><path d="M5 9l5-1v7l-5-1z" fill="#2030c0" stroke="#000"/><path d="M10 8h6v7l-6 0z" fill="#f0e000" stroke="#000"/></svg>
<svg style="position:absolute;left:235px;top:25px" width="18" height="16" viewBox="0 0 18 16"><rect x="1.5" y="1.5" width="11" height="13" fill="#fff" stroke="#000"/><path d="M3 4h2M6 4h2M3 6h2M3 8h2" stroke="#000"/><path d="M7 11l5-6 3 2.5-5 6z" fill="#fff" stroke="#000" stroke-width="1.4"/><path d="M10.5 13l4.5-5.5" stroke="#000" stroke-width="1.6"/></svg>
<svg style="position:absolute;left:257px;top:25px" width="18" height="16" viewBox="0 0 18 16"><rect x="1.5" y="1.5" width="10" height="13" fill="#fff" stroke="#000" stroke-width="1.2"/><path d="M3.5 4h2M6.5 4h3M3.5 6.5h3M7 6.5h2.5M3.5 9h2M6.5 9h3M3.5 11.5h3M7 11.5h2.5" stroke="#000"/><path d="M14.5 5v8" stroke="#000"/><path d="M12.5 11l2 3 2-3z" fill="#000"/></svg>
<svg style="position:absolute;left:282px;top:24px" width="18" height="16" viewBox="0 0 18 16"><circle cx="7.5" cy="9" r="5.3" fill="#fffff0" stroke="#e8e000" stroke-width="1.8"/><circle cx="7.5" cy="9" r="6.4" fill="none" stroke="#808000" stroke-width=".6"/><path d="M7.5 5.5v3.5l-1 1" stroke="#000" stroke-width="1.1" fill="none"/><path d="M1 3.5l2.5-2M14 3.5l-2.5-2M5.5 1h4" stroke="#000" stroke-width="1.4"/></svg>
<svg style="position:absolute;left:328px;top:24px" width="18" height="16" viewBox="0 0 18 16"><path d="M1 1h13l-2 3H3z" fill="#00e8f8"/><path d="M1 5.5q6.5-3 13 0L8.8 12v2H6.2v-2z" fill="#fff" stroke="#000" stroke-width="1.2"/><path d="M3 6q4.5 2 9 0" stroke="#000" fill="none" stroke-width=".8"/><path d="M6.5 14h2l-1 2z" fill="#00e8f8"/></svg>
<svg style="position:absolute;left:350px;top:26px" width="18" height="16" viewBox="0 0 18 16"><rect x="1.5" y="1.5" width="9" height="6" fill="#fff" stroke="#000" stroke-width="1.1"/><path d="M3 3.5h2M6 3.5h2M3 5.5h2M6 5.5h2" stroke="#000" stroke-width=".9"/><path d="M4.5 9l1.5-1.5 1.5 1.5M4.5 12l1.5 1.5 1.5-1.5M6 8v6" stroke="#000" stroke-width="1.1" fill="none"/></svg>
<svg style="position:absolute;left:395px;top:26px" width="18" height="16" viewBox="0 0 18 16"><path d="M2 1h3v3h2V1h3v3h2V1h3v2l2 5v6h-5v-3H9v3H0V8l2-5z" fill="#000" transform="translate(0,0) scale(.95,1)"/><rect x="2" y="10" width="2" height="2" fill="#fff"/><rect x="11" y="10" width="2" height="2" fill="#fff"/></svg>
<div style="left:0;top:50px;width:1019px;height:23px;background:linear-gradient(#fff 0,#fff 40%,#f3f4f6 41%,#f3f4f6);border-bottom:1px solid #dadada"></div>
<div style="left:35px;top:51px;width:1px;height:21px;background:#e4e4e4"></div>
<div style="left:946px;top:51px;width:1px;height:20px;background:#e0e0e0"></div>
<div class="p mono" style="left:7px;top:57px;font-size:12.6px;line-height:14px;letter-spacing:-0.58px;color:#000">#</div>
<div class="p mono" style="left:41px;top:57px;font-size:12.6px;line-height:14px;letter-spacing:-0.58px;color:#000">Debug Print</div>
<div class="p mono" style="left:3px;top:76px;font-size:12.6px;line-height:14px;letter-spacing:-0.58px;color:#000">279</div>
<div class="p mono" style="left:38px;top:76px;font-size:12.6px;line-height:14px;letter-spacing:-0.58px;color:#000">15:34:01.193 DBG #0</div>
<div class="p mono" style="left:185px;top:76px;font-size:12.6px;line-height:14px;letter-spacing:-0.58px;color:#000">2796</div>
<div class="p mono" style="left:227px;top:76px;font-size:12.6px;line-height:14px;letter-spacing:-0.58px;color:#000">2860 cmd.exe</div>
<div class="p mono" style="left:374px;top:76px;font-size:12.6px;line-height:14px;letter-spacing:-0.58px;color:#000">kVmInstructionError :C</div>
<div class="p mono" style="left:3px;top:90px;font-size:12.6px;line-height:14px;letter-spacing:-0.58px;color:#000">280</div>
<div class="p mono" style="left:38px;top:90px;font-size:12.6px;line-height:14px;letter-spacing:-0.58px;color:#000">15:34:01.193 DBG #0</div>
<div class="p mono" style="left:185px;top:90px;font-size:12.6px;line-height:14px;letter-spacing:-0.58px;color:#000">2796</div>
<div class="p mono" style="left:227px;top:90px;font-size:12.6px;line-height:14px;letter-spacing:-0.58px;color:#000">2860 cmd.exe</div>
<div class="p mono" style="left:374px;top:90px;font-size:12.6px;line-height:14px;letter-spacing:-0.58px;color:#000">kVmExitReason   :18</div>
<div class="p mono" style="left:3px;top:104px;font-size:12.6px;line-height:14px;letter-spacing:-0.58px;color:#000">281</div>
<div class="p mono" style="left:38px;top:104px;font-size:12.6px;line-height:14px;letter-spacing:-0.58px;color:#000">15:34:01.193 DBG #0</div>
<div class="p mono" style="left:185px;top:104px;font-size:12.6px;line-height:14px;letter-spacing:-0.58px;color:#000">2796</div>
<div class="p mono" style="left:227px;top:104px;font-size:12.6px;line-height:14px;letter-spacing:-0.58px;color:#000">2860 cmd.exe</div>
<div class="p mono" style="left:374px;top:104px;font-size:12.6px;line-height:14px;letter-spacing:-0.58px;color:#000">kVmExitIntrInfo  :0</div>
<div class="p mono" style="left:3px;top:118px;font-size:12.6px;line-height:14px;letter-spacing:-0.58px;color:#000">282</div>
<div class="p mono" style="left:38px;top:118px;font-size:12.6px;line-height:14px;letter-spacing:-0.58px;color:#000">15:34:01.193 DBG #0</div>
<div class="p mono" style="left:185px;top:118px;font-size:12.6px;line-height:14px;letter-spacing:-0.58px;color:#000">2796</div>
<div class="p mono" style="left:227px;top:118px;font-size:12.6px;line-height:14px;letter-spacing:-0.58px;color:#000">2860 cmd.exe</div>
<div class="p mono" style="left:374px;top:118px;font-size:12.6px;line-height:14px;letter-spacing:-0.58px;color:#000">kVmExitIntrErrorCode :0</div>
<div class="p mono" style="left:3px;top:132px;font-size:12.6px;line-height:14px;letter-spacing:-0.58px;color:#000">283</div>
<div class="p mono" style="left:38px;top:132px;font-size:12.6px;line-height:14px;letter-spacing:-0.58px;color:#000">15:34:01.193 DBG #0</div>
<div class="p mono" style="left:185px;top:132px;font-size:12.6px;line-height:14px;letter-spacing:-0.58px;color:#000">2796</div>
<div class="p mono" style="left:227px;top:132px;font-size:12.6px;line-height:14px;letter-spacing:-0.58px;color:#000">2860 cmd.exe</div>
<div class="p mono" style="left:374px;top:132px;font-size:12.6px;line-height:14px;letter-spacing:-0.58px;color:#000">kIdtVectoringInfoField :0</div>
<div class="p mono" style="left:3px;top:146px;font-size:12.6px;line-height:14px;letter-spacing:-0.58px;color:#000">284</div>
<div class="p mono" style="left:38px;top:146px;font-size:12.6px;line-height:14px;letter-spacing:-0.58px;color:#000">15:34:01.193 DBG #0</div>
<div class="p mono" style="left:185px;top:146px;font-size:12.6px;line-height:14px;letter-spacing:-0.58px;color:#000">2796</div>
<div class="p mono" style="left:227px;top:146px;font-size:12.6px;line-height:14px;letter-spacing:-0.58px;color:#000">2860 cmd.exe</div>
<div class="p mono" style="left:374px;top:146px;font-size:12.6px;line-height:14px;letter-spacing:-0.58px;color:#000">kIdtVectoringErrorCode :0</div>
<div class="p mono" style="left:3px;top:160px;font-size:12.6px;line-height:14px;letter-spacing:-0.58px;color:#000">285</div>
<div class="p mono" style="left:38px;top:160px;font-size:12.6px;line-height:14px;letter-spacing:-0.58px;color:#000">15:34:01.193 DBG #0</div>
<div class="p mono" style="left:185px;top:160px;font-size:12.6px;line-height:14px;letter-spacing:-0.58px;color:#000">2796</div>
<div class="p mono" style="left:227px;top:160px;font-size:12.6px;line-height:14px;letter-spacing:-0.58px;color:#000">2860 cmd.exe</div>
<div class="p mono" style="left:374px;top:160px;font-size:12.6px;line-height:14px;letter-spacing:-0.58px;color:#000">kVmExitInstructionLen :3</div>
<div class="p mono" style="left:3px;top:174px;font-size:12.6px;line-height:14px;letter-spacing:-0.58px;color:#000">286</div>
<div class="p mono" style="left:38px;top:174px;font-size:12.6px;line-height:14px;letter-spacing:-0.58px;color:#000">15:34:01.193 DBG #0</div>
<div class="p mono" style="left:185px;top:174px;font-size:12.6px;line-height:14px;letter-spacing:-0.58px;color:#000">2796</div>
<div class="p mono" style="left:227px;top:174px;font-size:12.6px;line-height:14px;letter-spacing:-0.58px;color:#000">2860 cmd.exe</div>
<div class="p mono" style="left:374px;top:174px;font-size:12.6px;line-height:14px;letter-spacing:-0.58px;color:#000">kVmxInstructionInfo :0</div>
<div class="p mono" style="left:3px;top:188px;font-size:12.6px;line-height:14px;letter-spacing:-0.58px;color:#000">287</div>
<div class="p mono" style="left:38px;top:188px;font-size:12.6px;line-height:14px;letter-spacing:-0.58px;color:#000">15:34:01.193 DBG #0</div>
<div class="p mono" style="left:185px;top:188px;font-size:12.6px;line-height:14px;letter-spacing:-0.58px;color:#000">2796</div>
<div class="p mono" style="left:227px;top:188px;font-size:12.6px;line-height:14px;letter-spacing:-0.58px;color:#000">2860 cmd.exe</div>
<div class="p mono" style="left:374px;top:188px;font-size:12.6px;line-height:14px;letter-spacing:-0.58px;color:#000">------------------------- End Printed Current VMCS by EmulateVmExit ----------...</div>
<div class="p mono" style="left:3px;top:202px;font-size:12.6px;line-height:14px;letter-spacing:-0.58px;color:#000">288</div>
<div class="p mono" style="left:38px;top:202px;font-size:12.6px;line-height:14px;letter-spacing:-0.58px;color:#000">15:34:01.193 DBG #0</div>
<div class="p mono" style="left:185px;top:202px;font-size:12.6px;line-height:14px;letter-spacing:-0.58px;color:#000">2796</div>
<div class="p mono" style="left:227px;top:202px;font-size:12.6px;line-height:14px;letter-spacing:-0.58px;color:#000">2860 cmd.exe</div>
<div class="p mono" style="left:374px;top:202px;font-size:12.6px;line-height:14px;letter-spacing:-0.58px;color:#000">[EmulateVmExit]VMCS01: kGuestRip :fffff8800357e320 , kGuestRsp fffffa803420cff0</div>
<div class="p mono" style="left:3px;top:216px;font-size:12.6px;line-height:14px;letter-spacing:-0.58px;color:#000">289</div>
<div class="p mono" style="left:38px;top:216px;font-size:12.6px;line-height:14px;letter-spacing:-0.58px;color:#000">15:34:01.193 DBG #0</div>
<div class="p mono" style="left:185px;top:216px;font-size:12.6px;line-height:14px;letter-spacing:-0.58px;color:#000">2796</div>
<div class="p mono" style="left:227px;top:216px;font-size:12.6px;line-height:14px;letter-spacing:-0.58px;color:#000">2860 cmd.exe</div>
<div class="p mono" style="left:374px;top:216px;font-size:12.6px;line-height:14px;letter-spacing:-0.58px;color:#000">[EmulateVmExit]VMCS01: kHostRip :fffff880035573f3 , kHostRsp fffffa8034149ff0</div>
<div class="p mono" style="left:3px;top:230px;font-size:12.6px;line-height:14px;letter-spacing:-0.58px;color:#000">290</div>
<div class="p mono" style="left:38px;top:230px;font-size:12.6px;line-height:14px;letter-spacing:-0.58px;color:#000">15:34:01.193 DBG #0</div>
<div class="p mono" style="left:185px;top:230px;font-size:12.6px;line-height:14px;letter-spacing:-0.58px;color:#000">2796</div>
<div class="p mono" style="left:227px;top:230px;font-size:12.6px;line-height:14px;letter-spacing:-0.58px;color:#000">2860 cmd.exe</div>
<div class="p mono" style="left:374px;top:230px;font-size:12.6px;line-height:14px;letter-spacing:-0.58px;color:#000">------------------------- Start Print VMCS12 by EmulateVmExit ----------------...</div>
<div class="p mono" style="left:3px;top:244px;font-size:12.6px;line-height:14px;letter-spacing:-0.58px;color:#000">291</div>
<div class="p mono" style="left:38px;top:244px;font-size:12.6px;line-height:14px;letter-spacing:-0.58px;color:#000">15:34:01.193 DBG #0</div>
<div class="p mono" style="left:185px;top:244px;font-size:12.6px;line-height:14px;letter-spacing:-0.58px;color:#000">2796</div>
<div class="p mono" style="left:227px;top:244px;font-size:12.6px;line-height:14px;letter-spacing:-0.58px;color:#000">2860 cmd.exe</div>
<div class="p mono" style="left:374px;top:244px;font-size:12.6px;line-height:14px;letter-spacing:-0.58px;color:#000">kVmInstructionError :C</div>
<div class="p mono" style="left:3px;top:258px;font-size:12.6px;line-height:14px;letter-spacing:-0.58px;color:#000">292</div>
<div class="p mono" style="left:38px;top:258px;font-size:12.6px;line-height:14px;letter-spacing:-0.58px;color:#000">15:34:01.193 DBG #0</div>
<div class="p mono" style="left:185px;top:258px;font-size:12.6px;line-height:14px;letter-spacing:-0.58px;color:#000">2796</div>
<div class="p mono" style="left:227px;top:258px;font-size:12.6px;line-height:14px;letter-spacing:-0.58px;color:#000">2860 cmd.exe</div>
<div class="p mono" style="left:374px;top:258px;font-size:12.6px;line-height:14px;letter-spacing:-0.58px;color:#000">kVmExitReason   :0</div>
<div class="p mono" style="left:3px;top:272px;font-size:12.6px;line-height:14px;letter-spacing:-0.58px;color:#000">293</div>
<div class="p mono" style="left:38px;top:272px;font-size:12.6px;line-height:14px;letter-spacing:-0.58px;color:#000">15:34:01.193 DBG #0</div>
<div class="p mono" style="left:185px;top:272px;font-size:12.6px;line-height:14px;letter-spacing:-0.58px;color:#000">2796</div>
<div class="p mono" style="left:227px;top:272px;font-size:12.6px;line-height:14px;letter-spacing:-0.58px;color:#000">2860 cmd.exe</div>
<div class="p mono" style="left:374px;top:272px;font-size:12.6px;line-height:14px;letter-spacing:-0.58px;color:#000">kVmExitIntrInfo  :80000603</div>
<div class="p mono" style="left:3px;top:286px;font-size:12.6px;line-height:14px;letter-spacing:-0.58px;color:#000">294</div>
<div class="p mono" style="left:38px;top:286px;font-size:12.6px;line-height:14px;letter-spacing:-0.58px;color:#000">15:34:01.193 DBG #0</div>
<div class="p mono" style="left:185px;top:286px;font-size:12.6px;line-height:14px;letter-spacing:-0.58px;color:#000">2796</div>
<div class="p mono" style="left:227px;top:286px;font-size:12.6px;line-height:14px;letter-spacing:-0.58px;color:#000">2860 cmd.exe</div>
<div class="p mono" style="left:374px;top:286px;font-size:12.6px;line-height:14px;letter-spacing:-0.58px;color:#000">kVmExitIntrErrorCode :0</div>
<div class="p mono" style="left:3px;top:300px;font-size:12.6px;line-height:14px;letter-spacing:-0.58px;color:#000">295</div>
<div class="p mono" style="left:38px;top:300px;font-size:12.6px;line-height:14px;letter-spacing:-0.58px;color:#000">15:34:01.193 DBG #0</div>
<div class="p mono" style="left:185px;top:300px;font-size:12.6px;line-height:14px;letter-spacing:-0.58px;color:#000">2796</div>
<div class="p mono" style="left:227px;top:300px;font-size:12.6px;line-height:14px;letter-spacing:-0.58px;color:#000">2860 cmd.exe</div>
<div class="p mono" style="left:374px;top:300px;font-size:12.6px;line-height:14px;letter-spacing:-0.58px;color:#000">kIdtVectoringInfoField :0</div>
<div class="p mono" style="left:3px;top:314px;font-size:12.6px;line-height:14px;letter-spacing:-0.58px;color:#000">296</div>
<div class="p mono" style="left:38px;top:314px;font-size:12.6px;line-height:14px;letter-spacing:-0.58px;color:#000">15:34:01.193 DBG #0</div>
<div class="p mono" style="left:185px;top:314px;font-size:12.6px;line-height:14px;letter-spacing:-0.58px;color:#000">2796</div>
<div class="p mono" style="left:227px;top:314px;font-size:12.6px;line-height:14px;letter-spacing:-0.58px;color:#000">2860 cmd.exe</div>
<div class="p mono" style="left:374px;top:314px;font-size:12.6px;line-height:14px;letter-spacing:-0.58px;color:#000">kIdtVectoringErrorCode :0</div>
<div class="p mono" style="left:3px;top:328px;font-size:12.6px;line-height:14px;letter-spacing:-0.58px;color:#000">297</div>
<div class="p mono" style="left:38px;top:328px;font-size:12.6px;line-height:14px;letter-spacing:-0.58px;color:#000">15:34:01.193 DBG #0</div>
<div class="p mono" style="left:185px;top:328px;font-size:12.6px;line-height:14px;letter-spacing:-0.58px;color:#000">2796</div>
<div class="p mono" style="left:227px;top:328px;font-size:12.6px;line-height:14px;letter-spacing:-0.58px;color:#000">2860 cmd.exe</div>
<div class="p mono" style="left:374px;top:328px;font-size:12.6px;line-height:14px;letter-spacing:-0.58px;color:#000">kVmExitInstructionLen :1</div>
<div class="p mono" style="left:3px;top:342px;font-size:12.6px;line-height:14px;letter-spacing:-0.58px;color:#000">298</div>
<div class="p mono" style="left:38px;top:342px;font-size:12.6px;line-height:14px;letter-spacing:-0.58px;color:#000">15:34:01.193 DBG #0</div>
<div class="p mono" style="left:185px;top:342px;font-size:12.6px;line-height:14px;letter-spacing:-0.58px;color:#000">2796</div>
<div class="p mono" style="left:227px;top:342px;font-size:12.6px;line-height:14px;letter-spacing:-0.58px;color:#000">2860 cmd.exe</div>
<div class="p mono" style="left:374px;top:342px;font-size:12.6px;line-height:14px;letter-spacing:-0.58px;color:#000">kVmxInstructionInfo :0</div>
<div class="p mono" style="left:3px;top:356px;font-size:12.6px;line-height:14px;letter-spacing:-0.58px;color:#000">299</div>
<div class="p mono" style="left:38px;top:356px;font-size:12.6px;line-height:14px;letter-spacing:-0.58px;color:#000">15:34:01.193 DBG #0</div>
<div class="p mono" style="left:185px;top:356px;font-size:12.6px;line-height:14px;letter-spacing:-0.58px;color:#000">2796</div>
<div class="p mono" style="left:227px;top:356px;font-size:12.6px;line-height:14px;letter-spacing:-0.58px;color:#000">2860 cmd.exe</div>
<div class="p mono" style="left:374px;top:356px;font-size:12.6px;line-height:14px;letter-spacing:-0.58px;color:#000">------------------------- End Printed VMCS12 by EmulateVmExit ----------------...</div>
<div class="p mono" style="left:3px;top:370px;font-size:12.6px;line-height:14px;letter-spacing:-0.58px;color:#000">300</div>
<div class="p mono" style="left:38px;top:370px;font-size:12.6px;line-height:14px;letter-spacing:-0.58px;color:#000">15:34:01.193 DBG #0</div>
<div class="p mono" style="left:185px;top:370px;font-size:12.6px;line-height:14px;letter-spacing:-0.58px;color:#000">2796</div>
<div class="p mono" style="left:227px;top:370px;font-size:12.6px;line-height:14px;letter-spacing:-0.58px;color:#000">2860 cmd.exe</div>
<div class="p mono" style="left:374px;top:370px;font-size:12.6px;line-height:14px;letter-spacing:-0.58px;color:#000">VMREAD64: field: 6820 base: FFFFFA8030F5E000 Offset: E90 Value: 246</div>
<div class="p mono" style="left:3px;top:384px;font-size:12.6px;line-height:14px;letter-spacing:-0.58px;color:#000">301</div>
<div class="p mono" style="left:3px;top:398px;font-size:12.6px;line-height:14px;letter-spacing:-0.58px;color:#000">302</div>
<div class="p mono" style="left:38px;top:398px;font-size:12.6px;line-height:14px;letter-spacing:-0.58px;color:#000">15:34:01.193 DBG #0</div>
<div class="p mono" style="left:185px;top:398px;font-size:12.6px;line-height:14px;letter-spacing:-0.58px;color:#000">2796</div>
<div class="p mono" style="left:227px;top:398px;font-size:12.6px;line-height:14px;letter-spacing:-0.58px;color:#000">2860 cmd.exe</div>
<div class="p mono" style="left:374px;top:398px;font-size:12.6px;line-height:14px;letter-spacing:-0.58px;color:#000">VMREAD64: field: 681E base: FFFFFA8030F5E000 Offset: E88 Value: 773DCB60</div>
<div class="p mono" style="left:3px;top:412px;font-size:12.6px;line-height:14px;letter-spacing:-0.58px;color:#000">303</div>
<div class="p mono" style="left:3px;top:426px;font-size:12.6px;line-height:14px;letter-spacing:-0.58px;color:#000">304</div>
<div class="p mono" style="left:38px;top:426px;font-size:12.6px;line-height:14px;letter-spacing:-0.58px;color:#000">15:34:01.193 DBG #0</div>
<div class="p mono" style="left:185px;top:426px;font-size:12.6px;line-height:14px;letter-spacing:-0.58px;color:#000">2796</div>
<div class="p mono" style="left:227px;top:426px;font-size:12.6px;line-height:14px;letter-spacing:-0.58px;color:#000">2860 cmd.exe</div>
<div class="p mono" style="left:374px;top:426px;font-size:12.6px;line-height:14px;letter-spacing:-0.58px;color:#000">VMREAD64: field: 681C base: FFFFFA8030F5E000 Offset: E80 Value: 29F410</div>
<div class="p mono" style="left:3px;top:440px;font-size:12.6px;line-height:14px;letter-spacing:-0.58px;color:#000">305</div>
<div class="p mono" style="left:3px;top:454px;font-size:12.6px;line-height:14px;letter-spacing:-0.58px;color:#000">306</div>
<div class="p mono" style="left:38px;top:454px;font-size:12.6px;line-height:14px;letter-spacing:-0.58px;color:#000">15:34:01.193 DBG #0</div>
<div class="p mono" style="left:185px;top:454px;font-size:12.6px;line-height:14px;letter-spacing:-0.58px;color:#000">2796</div>
<div class="p mono" style="left:227px;top:454px;font-size:12.6px;line-height:14px;letter-spacing:-0.58px;color:#000">2860 cmd.exe</div>
<div class="p mono" style="left:374px;top:454px;font-size:12.6px;line-height:14px;letter-spacing:-0.58px;color:#000">VMREAD32: field: 4402 base: FFFFFA8030F5E000 Offset: 918 Value: 700000000</div>
<div class="p mono" style="left:3px;top:468px;font-size:12.6px;line-height:14px;letter-spacing:-0.58px;color:#000">307</div>
<div class="p mono" style="left:3px;top:482px;font-size:12.6px;line-height:14px;letter-spacing:-0.58px;color:#000">308</div>
<div class="p mono" style="left:38px;top:482px;font-size:12.6px;line-height:14px;letter-spacing:-0.58px;color:#000">15:34:01.193 DBG #0</div>
<div class="p mono" style="left:185px;top:482px;font-size:12.6px;line-height:14px;letter-spacing:-0.58px;color:#000">2796</div>
<div class="p mono" style="left:227px;top:482px;font-size:12.6px;line-height:14px;letter-spacing:-0.58px;color:#000">2860 cmd.exe</div>
<div class="p mono" style="left:374px;top:482px;font-size:12.6px;line-height:14px;letter-spacing:-0.58px;color:#000">VMREAD32: field: 4404 base: FFFFFA8030F5E000 Offset: 920 Value: 780000603</div>
<div class="p mono" style="left:3px;top:496px;font-size:12.6px;line-height:14px;letter-spacing:-0.58px;color:#000">309</div>
<div class="p mono" style="left:3px;top:510px;font-size:12.6px;line-height:14px;letter-spacing:-0.58px;color:#000">310</div>
<div class="p mono" style="left:38px;top:510px;font-size:12.6px;line-height:14px;letter-spacing:-0.58px;color:#000">15:34:01.193 DBG #0</div>
<div class="p mono" style="left:185px;top:510px;font-size:12.6px;line-height:14px;letter-spacing:-0.58px;color:#000">2796</div>
<div class="p mono" style="left:227px;top:510px;font-size:12.6px;line-height:14px;letter-spacing:-0.58px;color:#000">2860 cmd.exe</div>
<div class="p mono" style="left:374px;top:510px;font-size:12.6px;line-height:14px;letter-spacing:-0.58px;color:#000">VMWRITE: field: 4016 base: FFFFFA8030F5E000 Offset: 868 Value: 80000603</div>
<div class="p mono" style="left:3px;top:524px;font-size:12.6px;line-height:14px;letter-spacing:-0.58px;color:#000">311</div>
<div class="p mono" style="left:3px;top:538px;font-size:12.6px;line-height:14px;letter-spacing:-0.58px;color:#000">312</div>
<div class="p mono" style="left:38px;top:538px;font-size:12.6px;line-height:14px;letter-spacing:-0.58px;color:#000">15:34:01.193 DBG #0</div>
<div class="p mono" style="left:185px;top:538px;font-size:12.6px;line-height:14px;letter-spacing:-0.58px;color:#000">2796</div>
<div class="p mono" style="left:227px;top:538px;font-size:12.6px;line-height:14px;letter-spacing:-0.58px;color:#000">2860 cmd.exe</div>
<div class="p mono" style="left:374px;top:538px;font-size:12.6px;line-height:14px;letter-spacing:-0.58px;color:#000">VMWRITE: field: 401A base: FFFFFA8030F5E000 Offset: 878 Value: 1</div>
<div class="p mono" style="left:3px;top:552px;font-size:12.6px;line-height:14px;letter-spacing:-0.58px;color:#000">313</div>
<div class="p mono" style="left:3px;top:566px;font-size:12.6px;line-height:14px;letter-spacing:-0.58px;color:#000">314</div>
<div class="p mono" style="left:38px;top:566px;font-size:12.6px;line-height:14px;letter-spacing:-0.58px;color:#000">15:34:01.193 DBG #0</div>
<div class="p mono" style="left:185px;top:566px;font-size:12.6px;line-height:14px;letter-spacing:-0.58px;color:#000">2796</div>
<div class="p mono" style="left:227px;top:566px;font-size:12.6px;line-height:14px;letter-spacing:-0.58px;color:#000">2860 cmd.exe</div>
<div class="p mono" style="left:374px;top:566px;font-size:12.6px;line-height:14px;letter-spacing:-0.58px;color:#000">L1 GuestIp= 00000000773DCB60, #BP</div>
<div class="p mono" style="left:3px;top:580px;font-size:12.6px;line-height:14px;letter-spacing:-0.58px;color:#000">315</div>
<div class="p mono" style="left:38px;top:580px;font-size:12.6px;line-height:14px;letter-spacing:-0.58px;color:#000">15:34:01.193 DBG #0</div>
<div class="p mono" style="left:185px;top:580px;font-size:12.6px;line-height:14px;letter-spacing:-0.58px;color:#000">2796</div>
<div class="p mono" style="left:227px;top:580px;font-size:12.6px;line-height:14px;letter-spacing:-0.58px;color:#000">2860 cmd.exe</div>
<div class="p mono" style="left:374px;top:580px;font-size:12.6px;line-height:14px;letter-spacing:-0.58px;color:#000">----Start Emulate VMRESUME---</div>
<div class="p mono" style="left:3px;top:594px;font-size:12.6px;line-height:14px;letter-spacing:-0.58px;color:#000">316</div>
<div class="p mono" style="left:38px;top:594px;font-size:12.6px;line-height:14px;letter-spacing:-0.58px;color:#000">15:34:01.193 DBG #0</div>
<div class="p mono" style="left:185px;top:594px;font-size:12.6px;line-height:14px;letter-spacing:-0.58px;color:#000">2796</div>
<div class="p mono" style="left:227px;top:594px;font-size:12.6px;line-height:14px;letter-spacing:-0.58px;color:#000">2860 cmd.exe</div>
<div class="p mono" style="left:374px;top:594px;font-size:12.6px;line-height:14px;letter-spacing:-0.58px;color:#000">vmcs02_va: FFFFFA8030F5E000</div>
<div class="p mono" style="left:3px;top:608px;font-size:12.6px;line-height:14px;letter-spacing:-0.58px;color:#000">317</div>
<div class="p mono" style="left:38px;top:608px;font-size:12.6px;line-height:14px;letter-spacing:-0.58px;color:#000">15:34:01.193 DBG #0</div>
<div class="p mono" style="left:185px;top:608px;font-size:12.6px;line-height:14px;letter-spacing:-0.58px;color:#000">2796</div>
<div class="p mono" style="left:227px;top:608px;font-size:12.6px;line-height:14px;letter-spacing:-0.58px;color:#000">2860 cmd.exe</div>
<div class="p mono" style="left:374px;top:608px;font-size:12.6px;line-height:14px;letter-spacing:-0.58px;color:#000">Vmcs12 GuestCr3: 935F7000  Vmcs02 GuestCr3: 935F7000</div>
<div class="p mono" style="left:3px;top:622px;font-size:12.6px;line-height:14px;letter-spacing:-0.58px;color:#000">318</div>
<div class="p mono" style="left:38px;top:622px;font-size:12.6px;line-height:14px;letter-spacing:-0.58px;color:#000">15:34:01.193 DBG #0</div>
<div class="p mono" style="left:185px;top:622px;font-size:12.6px;line-height:14px;letter-spacing:-0.58px;color:#000">2796</div>
<div class="p mono" style="left:227px;top:622px;font-size:12.6px;line-height:14px;letter-spacing:-0.58px;color:#000">2860 cmd.exe</div>
<div class="p mono" style="left:374px;top:622px;font-size:12.6px;line-height:14px;letter-spacing:-0.58px;color:#000">VMCS12 Guest rip : 773dcb60 guest_context-&gt;irql: 0</div>
<div class="p mono" style="left:3px;top:636px;font-size:12.6px;line-height:14px;letter-spacing:-0.58px;color:#000">319</div>
<div class="p mono" style="left:38px;top:636px;font-size:12.6px;line-height:14px;letter-spacing:-0.58px;color:#000">15:34:01.193 DBG #0</div>
<div class="p mono" style="left:185px;top:636px;font-size:12.6px;line-height:14px;letter-spacing:-0.58px;color:#000">2796</div>
<div class="p mono" style="left:227px;top:636px;font-size:12.6px;line-height:14px;letter-spacing:-0.58px;color:#000">2860 cmd.exe</div>
<div class="p mono" style="left:374px;top:636px;font-size:12.6px;line-height:14px;letter-spacing:-0.58px;color:#000">VMCS12 Guest rsp : 29f410</div>
<div class="p mono" style="left:3px;top:650px;font-size:12.6px;line-height:14px;letter-spacing:-0.58px;color:#000">320</div>
<div class="p mono" style="left:38px;top:650px;font-size:12.6px;line-height:14px;letter-spacing:-0.58px;color:#000">15:34:01.193 DBG #0</div>
<div class="p mono" style="left:185px;top:650px;font-size:12.6px;line-height:14px;letter-spacing:-0.58px;color:#000">2796</div>
<div class="p mono" style="left:227px;top:650px;font-size:12.6px;line-height:14px;letter-spacing:-0.58px;color:#000">2860 cmd.exe</div>
<div class="p mono" style="left:374px;top:650px;font-size:12.6px;line-height:14px;letter-spacing:-0.58px;color:#000">VMCS12 Guest rsp : 246</div>
<div class="p mono" style="left:3px;top:664px;font-size:12.6px;line-height:14px;letter-spacing:-0.58px;color:#000">321</div>
<div class="p mono" style="left:38px;top:664px;font-size:12.6px;line-height:14px;letter-spacing:-0.58px;color:#000">15:34:01.193 DBG #0</div>
<div class="p mono" style="left:185px;top:664px;font-size:12.6px;line-height:14px;letter-spacing:-0.58px;color:#000">2796</div>
<div class="p mono" style="left:227px;top:664px;font-size:12.6px;line-height:14px;letter-spacing:-0.58px;color:#000">2860 cmd.exe</div>
<div class="p mono" style="left:374px;top:664px;font-size:12.6px;line-height:14px;letter-spacing:-0.58px;color:#000">------------------------- Start Printe Current VMCS by VmresumeEmulate -------...</div>
<div class="p mono" style="left:3px;top:678px;font-size:12.6px;line-height:14px;letter-spacing:-0.58px;color:#000">322</div>
<div class="p mono" style="left:38px;top:678px;font-size:12.6px;line-height:14px;letter-spacing:-0.58px;color:#000">15:34:01.193 DBG #0</div>
<div class="p mono" style="left:185px;top:678px;font-size:12.6px;line-height:14px;letter-spacing:-0.58px;color:#000">2796</div>
<div class="p mono" style="left:227px;top:678px;font-size:12.6px;line-height:14px;letter-spacing:-0.58px;color:#000">2860 cmd.exe</div>
<div class="p mono" style="left:374px;top:678px;font-size:12.6px;line-height:14px;letter-spacing:-0.58px;color:#000">###################### 16bit Control State #############################</div>
<div class="p mono" style="left:3px;top:692px;font-size:12.6px;line-height:14px;letter-spacing:-0.58px;color:#000">323</div>
<div class="p mono" style="left:38px;top:692px;font-size:12.6px;line-height:14px;letter-spacing:-0.58px;color:#000">15:34:01.193 DBG #0</div>
<div class="p mono" style="left:185px;top:692px;font-size:12.6px;line-height:14px;letter-spacing:-0.58px;color:#000">2796</div>
<div class="p mono" style="left:227px;top:692px;font-size:12.6px;line-height:14px;letter-spacing:-0.58px;color:#000">2860 cmd.exe</div>
<div class="p mono" style="left:374px;top:692px;font-size:12.6px;line-height:14px;letter-spacing:-0.58px;color:#000">kHostIa32Pat: 0</div>
<div class="p mono" style="left:3px;top:706px;font-size:12.6px;line-height:14px;letter-spacing:-0.58px;color:#000">324</div>
<div class="p mono" style="left:38px;top:706px;font-size:12.6px;line-height:14px;letter-spacing:-0.58px;color:#000">15:34:01.193 DBG #0</div>
<div class="p mono" style="left:185px;top:706px;font-size:12.6px;line-height:14px;letter-spacing:-0.58px;color:#000">2796</div>
<div class="p mono" style="left:227px;top:706px;font-size:12.6px;line-height:14px;letter-spacing:-0.58px;color:#000">2860 cmd.exe</div>
<div class="p mono" style="left:374px;top:706px;font-size:12.6px;line-height:14px;letter-spacing:-0.58px;color:#000">kHostIa32PatHigh: 0</div>
<div class="p mono" style="left:3px;top:720px;font-size:12.6px;line-height:14px;letter-spacing:-0.58px;color:#000">325</div>
<div class="p mono" style="left:38px;top:720px;font-size:12.6px;line-height:14px;letter-spacing:-0.58px;color:#000">15:34:01.193 DBG #0</div>
<div class="p mono" style="left:185px;top:720px;font-size:12.6px;line-height:14px;letter-spacing:-0.58px;color:#000">2796</div>
<div class="p mono" style="left:227px;top:720px;font-size:12.6px;line-height:14px;letter-spacing:-0.58px;color:#000">2860 cmd.exe</div>
<div class="p mono" style="left:374px;top:720px;font-size:12.6px;line-height:14px;letter-spacing:-0.58px;color:#000">kHostIa32Efer: 0</div>
<div style="left:380px;top:595px;width:366px;height:71px;border:1px solid #e83a3a"></div>
<svg style="position:absolute;left:0;top:0" width="1019" height="729"><polygon points="604,571 628,564 624,570 724,593 722,595 623,575 625,582" fill="#e83a3a"/></svg>
<div class="p" style="left:729px;top:569px;font-size:16px;line-height:19px;color:#e83a3a">L1 Breakpoint handler</div>
<div class="p" style="left:760px;top:636px;font-size:16px;line-height:19px;color:#e83a3a">L1 vmresume to L2</div>
</div>
<div style="left:0;top:0;width:1867px;height:32px;background:#d5dbed;border-bottom:1px solid #dfe6f8"></div>
<div style="left:-4px;top:5px;width:63px;height:27px;background:#dde6f4;border:1px solid #a9b9d3;border-bottom:none;border-radius:4px 4px 0 0"></div>
<div style="left:0;top:12px;width:4px;height:10px;background:#333;clip-path:polygon(0 40%,100% 0,100% 100%,0 100%)"></div>
<div class="p" style="left:7px;top:11px;font-size:13px;line-height:16px;color:#111">主页</div>
<div class="p" style="left:42px;top:10px;font:bold 13px/16px 'Liberation Sans';color:#7a94b8">✕</div>
<div style="left:63px;top:5px;width:134px;height:28px;background:#fff;border:1px solid #b5c3d9;border-bottom:none;border-radius:4px 4px 0 0"></div>
<div style="left:68px;top:11px;width:12px;height:11px;border:1px solid #555;background:#fff"></div><div style="left:71px;top:14px;width:12px;height:12px;border:1px solid #555;background:#fff"></div>
<div style="left:77px;top:17px;width:7px;height:10px;background:#2cb52c;clip-path:polygon(0 0,100% 50%,0 100%)"></div>
<div class="p" style="left:88px;top:12px;font:bold 12px/15px 'Liberation Sans';color:#000;letter-spacing:-0.15px">Windows 7 x64</div>
<div class="p" style="left:181px;top:11px;font:bold 13px/16px 'Liberation Sans';color:#7a94b8">✕</div>
<div style="left:0;top:943px;width:1867px;height:13px;background:#f0f0f0;border-top:1px solid #fff"></div>
<div style="left:-4px;top:944px;width:1843px;height:14px;background:linear-gradient(#fff 0,#fff 1px,#e2f0fa 1px,#d6ebf9 6px,#a9d8f3 7px,#a6d6f2 100%);border:1px solid #4a80b0;border-radius:0 3px 0 0"></div>
<div style="left:1860px;top:944px;width:10px;height:14px;background:linear-gradient(#fafafa,#dcdcdc);border:1px solid #aaa;border-radius:2px"></div>
<div style="left:913px;top:948px;width:8px;height:8px;background:repeating-linear-gradient(90deg,#2a5a8a 0,#2a5a8a 1px,transparent 1px,transparent 3px)"></div>
</body></html>
